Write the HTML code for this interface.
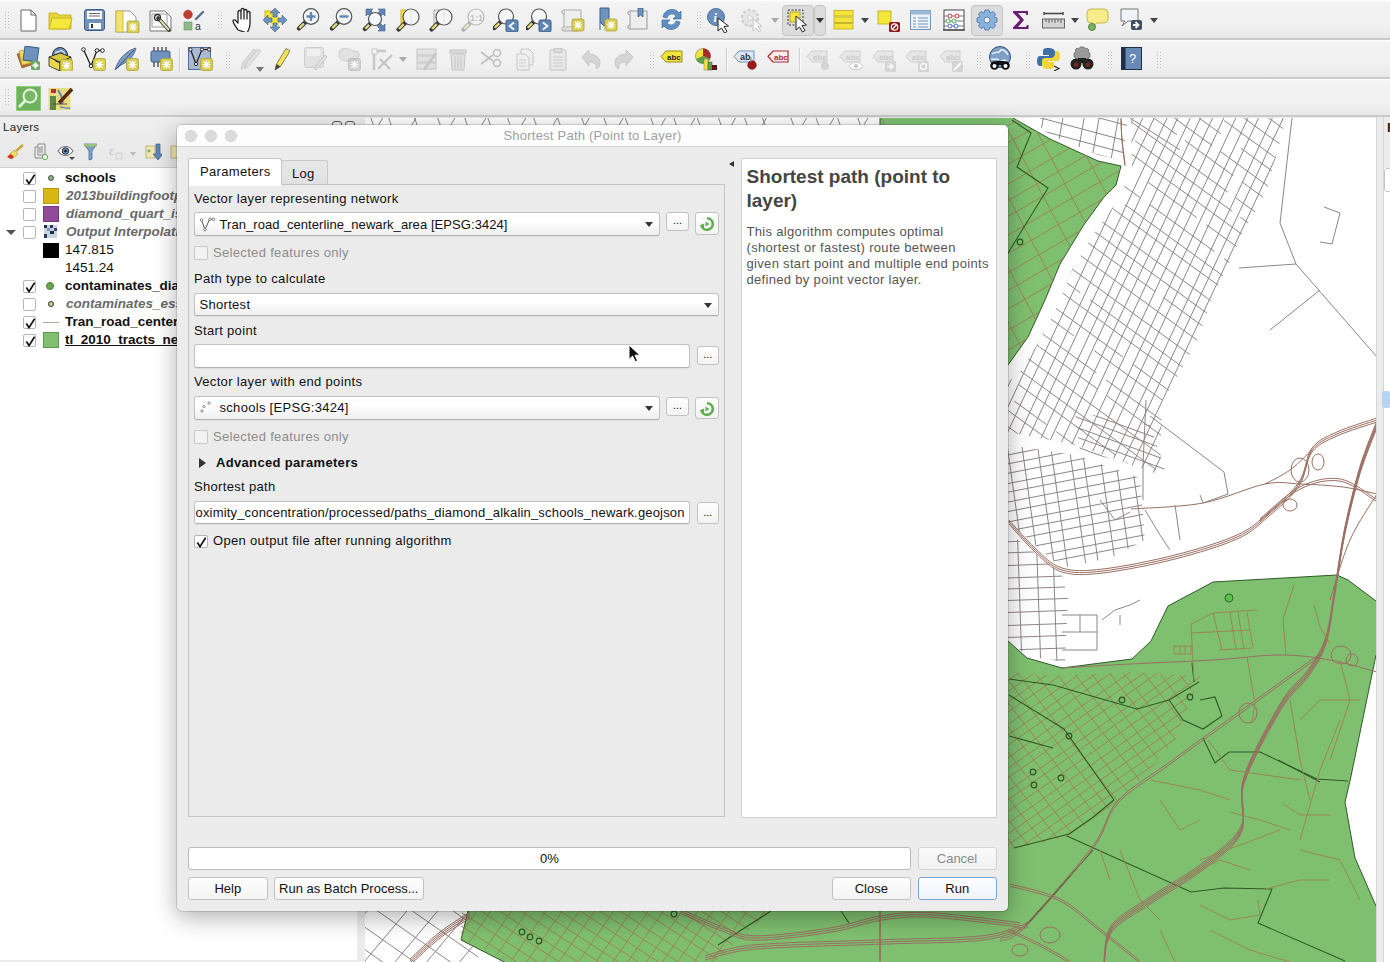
<!DOCTYPE html>
<html><head><meta charset="utf-8">
<style>
*{box-sizing:border-box;margin:0;padding:0}
html,body{width:1390px;height:962px;overflow:hidden;background:#ececec;font-family:"Liberation Sans",sans-serif;font-size:13px;color:#111}
.abs{position:absolute}
.tb{position:absolute;left:0;width:1390px;background:linear-gradient(#f3f3f3,#f0f0f0 70%,#e8e8e8);border-bottom:2px solid #cacaca;box-shadow:inset 0 1px #fff,inset 0 3px #f6f6f6}
.grip{position:absolute;width:6px;height:18px;background-image:radial-gradient(circle,#bdbdbd 0.7px,transparent 0.9px);background-size:3px 3px}
#layers{position:absolute;left:0;top:117px;width:358px;height:845px;background:#ececec}
#tree{position:absolute;left:0;top:168px;width:357px;height:792px;background:#fff}
.row{position:absolute;left:0;height:18px;width:357px;font-size:13.5px;line-height:18px;white-space:nowrap;overflow:hidden}
.cb{position:absolute;width:13px;height:13px;border:1px solid #b5b5b5;background:#fff;border-radius:2px}
.cb svg{position:absolute;left:1px;top:1px}
#map{position:absolute;left:365px;top:118px;width:1011px;height:844px;background:#fff;overflow:hidden}
#rdock{position:absolute;left:1376px;top:117px;width:14px;height:845px;background:#ececec}
#dlg{position:absolute;left:177px;top:125px;width:831px;height:786px;background:#ececec;border-radius:5px;box-shadow:0 0 0 1px rgba(0,0,0,0.12),0 6px 24px rgba(0,0,0,0.32);overflow:hidden}
#dtitle{position:absolute;left:0;top:0;width:831px;height:22px;background:#fdfdfd;border-bottom:1px solid #d4d4d4;text-align:center;font-size:13px;line-height:22px;color:#a0a0a0;letter-spacing:0.23px}
.tl{position:absolute;top:5px;width:12px;height:12px;border-radius:50%;background:#dcdcdc;border:1px solid #d0d0d0}
.lbl{position:absolute;font-size:13px;line-height:16px;color:#111;white-space:nowrap;letter-spacing:0.33px}
.combo{position:absolute;height:25px;background:linear-gradient(#fff 35%,#efefef);border:1px solid #c2c2c2;border-bottom-color:#b0b0b0;border-radius:3px;box-shadow:0 1px 0 rgba(0,0,0,0.05);font-size:13px;line-height:23px;white-space:nowrap;overflow:hidden}
.arrow{position:absolute;width:0;height:0;border-left:4px solid transparent;border-right:4px solid transparent;border-top:5px solid #333}
.btn{position:absolute;background:linear-gradient(#fefefe,#f3f3f3);border:1px solid #c2c2c2;border-radius:3px;font-size:13px;text-align:center;line-height:22px;white-space:nowrap}
</style></head><body>

<!-- toolbars -->
<div class="tb" style="top:0;height:40px"></div>
<div class="tb" style="top:40px;height:39px"></div>
<div class="tb" style="top:79px;height:38px"></div>
<!--tb--><div class="grip" style="left:4px;top:11px"></div>
<svg class="abs" style="left:20px;top:9px" width="17" height="23" viewBox="0 0 17 23"><path d="M1 1h10l5 5v16H1z" fill="#fff" stroke="#666" stroke-width="1"/><path d="M11 1v5h5" fill="none" stroke="#666"/></svg>
<svg class="abs" style="left:48px;top:10px" width="25" height="20" viewBox="0 0 25 20"><path d="M1 3h8l2 2h12v14H1z" fill="#e6d43a" stroke="#c9b52a"/><path d="M1 19l3-11h20l-3 11z" fill="#f6e83a" stroke="#c9b52a"/></svg>
<svg class="abs" style="left:84px;top:9px" width="21" height="22" viewBox="0 0 21 22"><rect x="0.5" y="0.5" width="20" height="21" rx="2.5" fill="#6f93bd" stroke="#3d5f89"/><rect x="3" y="2" width="15" height="8" fill="#fff"/><path d="M5 4.5h11M5 7h11" stroke="#555" stroke-width="0.9"/><rect x="5" y="14" width="12" height="6" fill="#fff"/><rect x="7" y="15" width="2" height="4" fill="#333"/></svg>
<svg class="abs" style="left:115px;top:10px" width="25" height="23" viewBox="0 0 25 23"><path d="M1 1h14l6 6v15H1z" fill="#fff" stroke="#999"/><rect x="1" y="1" width="7" height="21" fill="#f3e36a" stroke="#c6b43c" stroke-width="0.8"/><rect x="12" y="11" width="12" height="12" rx="2" fill="#d9cf55" stroke="#aa9f35" stroke-width="0.8"/><path d="M18 13v8M14 17h8M15 14l6 6M21 14l-6 6" stroke="#fff" stroke-width="1.2"/></svg>
<svg class="abs" style="left:149px;top:10px" width="24" height="23" viewBox="0 0 24 23"><path d="M1 1h15l6 6v14H1z" fill="#fafafa" stroke="#777"/><rect x="3" y="4" width="15" height="13" fill="none" stroke="#888" stroke-width="0.8"/><path d="M9 8l11 12" stroke="#333" stroke-width="3.6" stroke-linecap="round"/><path d="M10 9l10 11" stroke="#e4dfb0" stroke-width="2"/><circle cx="8.5" cy="7.5" r="3" fill="none" stroke="#333" stroke-width="1.3"/></svg>
<svg class="abs" style="left:183px;top:9px" width="22" height="22" viewBox="0 0 22 22"><circle cx="5" cy="5.5" r="4.3" fill="#c23b2e" stroke="#8a2a20" stroke-width="0.6"/><path d="M13 10l7-7" stroke="#546f8f" stroke-width="2.4" stroke-linecap="round"/><rect x="1" y="13" width="8" height="8" fill="#8fb989" stroke="#6a9665" stroke-width="0.6"/><text x="12" y="21" font-size="10.5" font-family="Liberation Sans" fill="#333">a</text></svg>
<div class="grip" style="left:217px;top:11px"></div>
<svg class="abs" style="left:232px;top:7px" width="21" height="25" viewBox="0 0 21 25"><path d="M6 23c-2-3-5-7-5-9 0-1.5 2-1.5 3 0l2 2V5c0-2 3-2 3 0v7-9c0-2 3-2 3 0v9-8c0-2 3-2 3 0v8-6c0-2 3-2 3 0v11c0 4-2 7-3 9z" fill="#fff" stroke="#222" stroke-width="1.3" stroke-linejoin="round"/></svg>
<svg class="abs" style="left:263px;top:8px" width="24" height="24" viewBox="0 0 24 24"><rect x="2" y="3" width="12" height="11" fill="#f3e33a" stroke="#c9b52a"/><rect x="8" y="9" width="8" height="8" fill="#f3e33a"/><path d="M12 0l5 5h-3v4h-4V5H7z M12 24l5-5h-3v-4h-4v4H7z M0 12l5-5v3h4v4H5v3z M24 12l-5-5v3h-4v4h4v3z" fill="#6f93bd" stroke="#45678f" stroke-width="0.6"/></svg>
<svg class="abs" style="left:295px;top:8px" width="25" height="24" viewBox="0 0 25 24"><path d="M10.54 13.96L3.91 20.59" stroke="#333" stroke-width="4.2" stroke-linecap="round"/><path d="M8.98 15.52L4.300000000000001 20.2" stroke="#e5dc7a" stroke-width="2.4"/><circle cx="16" cy="8.5" r="7.8" fill="#f4f6f8" stroke="#555" stroke-width="1.2"/><path d="M16 4v9M11.5 8.5h9" stroke="#5f86b5" stroke-width="2.4"/></svg>
<svg class="abs" style="left:328px;top:8px" width="25" height="24" viewBox="0 0 25 24"><path d="M10.54 13.96L3.91 20.59" stroke="#333" stroke-width="4.2" stroke-linecap="round"/><path d="M8.98 15.52L4.300000000000001 20.2" stroke="#e5dc7a" stroke-width="2.4"/><circle cx="16" cy="8.5" r="7.8" fill="#f4f6f8" stroke="#555" stroke-width="1.2"/><path d="M11.5 8.5h9" stroke="#5f86b5" stroke-width="2.4"/></svg>
<svg class="abs" style="left:361px;top:8px" width="25" height="24" viewBox="0 0 25 24"><path d="M5 1h7l-2 2 3 3-3 3-3-3-2 2z M24 1v7l-2-2-3 3-3-3 3-3-2-2z M24 23h-7l2-2-3-3 3-3 3 3 2-2z" fill="#5f86b5" stroke="#3f5f86" stroke-width="0.6"/><path d="M9.45 15.55L3.924999999999999 21.075000000000003" stroke="#333" stroke-width="4.2" stroke-linecap="round"/><path d="M8.149999999999999 16.85L4.25 20.75" stroke="#e5dc7a" stroke-width="2.4"/><circle cx="14" cy="11" r="6.5" fill="#f4f6f8" stroke="#555" stroke-width="1.2"/></svg>
<svg class="abs" style="left:395px;top:8px" width="25" height="24" viewBox="0 0 25 24"><rect x="6" y="2" width="9" height="14" fill="#f3e33a" stroke="#c9b52a"/><path d="M10.4 14.6L3.5999999999999996 21.4" stroke="#333" stroke-width="4.2" stroke-linecap="round"/><path d="M8.8 16.2L4.0 21.0" stroke="#e5dc7a" stroke-width="2.4"/><circle cx="16" cy="9" r="8" fill="#f4f6f8" stroke="#555" stroke-width="1.2"/><path d="M16 1v16" stroke="#ddd" stroke-width="0.8"/></svg>
<svg class="abs" style="left:428px;top:8px" width="25" height="24" viewBox="0 0 25 24"><rect x="6" y="2" width="9" height="14" fill="#eee" stroke="#aaa"/><path d="M10.4 14.6L3.5999999999999996 21.4" stroke="#333" stroke-width="4.2" stroke-linecap="round"/><path d="M8.8 16.2L4.0 21.0" stroke="#e5dc7a" stroke-width="2.4"/><circle cx="16" cy="9" r="8" fill="#f4f6f8" stroke="#555" stroke-width="1.2"/><path d="M16 1v16" stroke="#ddd" stroke-width="0.8"/></svg>
<svg class="abs" style="left:460px;top:8px" width="25" height="24" viewBox="0 0 25 24"><g opacity="0.35"><path d="M10.4 14.6L3.5999999999999996 21.4" stroke="#333" stroke-width="4.2" stroke-linecap="round"/><path d="M8.8 16.2L4.0 21.0" stroke="#e5dc7a" stroke-width="2.4"/><circle cx="16" cy="9" r="8" fill="#f4f6f8" stroke="#555" stroke-width="1.2"/><text x="10" y="12.5" font-size="9" font-family="Liberation Sans" font-weight="bold" fill="#666">1:1</text></g></svg>
<svg class="abs" style="left:493px;top:8px" width="26" height="24" viewBox="0 0 26 24"><path d="M7.75 13.75L1.375 20.125" stroke="#333" stroke-width="4.2" stroke-linecap="round"/><path d="M6.25 15.25L1.75 19.75" stroke="#e5dc7a" stroke-width="2.4"/><circle cx="13" cy="8.5" r="7.5" fill="#f4f6f8" stroke="#555" stroke-width="1.2"/><rect x="13" y="12" width="12" height="12" rx="1.5" fill="#5f86b5" stroke="#3f5f86"/><path d="M21 14.5l-4.5 3.5 4.5 3.5" fill="none" stroke="#fff" stroke-width="1.6"/></svg>
<svg class="abs" style="left:526px;top:8px" width="26" height="24" viewBox="0 0 26 24"><path d="M7.75 13.75L1.375 20.125" stroke="#333" stroke-width="4.2" stroke-linecap="round"/><path d="M6.25 15.25L1.75 19.75" stroke="#e5dc7a" stroke-width="2.4"/><circle cx="13" cy="8.5" r="7.5" fill="#f4f6f8" stroke="#555" stroke-width="1.2"/><rect x="13" y="12" width="12" height="12" rx="1.5" fill="#5f86b5" stroke="#3f5f86"/><path d="M17 14.5l4.5 3.5-4.5 3.5" fill="none" stroke="#fff" stroke-width="1.6"/></svg>
<svg class="abs" style="left:561px;top:9px" width="24" height="23" viewBox="0 0 24 23"><path d="M3 1h17v17H3z" fill="#eee" stroke="#aaa"/><path d="M3 1c-3 0-3 4 0 4M3 18c-3 0-3 4 0 4h14" fill="#ddd" stroke="#aaa"/><rect x="11" y="10" width="12" height="12" rx="2" fill="#d9cf55" stroke="#aa9f35" stroke-width="0.8"/><path d="M17 12v8M13 16h8M14 13l6 6M20 13l-6 6" stroke="#fff" stroke-width="1.2"/></svg>
<svg class="abs" style="left:599px;top:7px" width="19" height="25" viewBox="0 0 19 25"><path d="M1 1h9v14l-5 4-4-4z" fill="#6f93bd" stroke="#3f5f86"/><path d="M1 15v8" stroke="#3f5f86"/><rect x="6" y="12" width="12" height="12" rx="2" fill="#d9cf55" stroke="#aa9f35" stroke-width="0.8"/><path d="M12 14v8M8 18h8M9 15l6 6M15 15l-6 6" stroke="#fff" stroke-width="1.2"/></svg>
<svg class="abs" style="left:627px;top:8px" width="22" height="23" viewBox="0 0 22 23"><path d="M3 3h17v18H3z" fill="#eee" stroke="#999"/><path d="M3 3c-3 0-3 4 0 4M3 21c-3 0-3-4 0-4" fill="#ddd" stroke="#999"/><path d="M11 0h5v9l-2.5-2-2.5 2z" fill="#6f93bd" stroke="#3f5f86" stroke-width="0.8"/></svg>
<svg class="abs" style="left:660px;top:8px" width="23" height="23" viewBox="0 0 23 23"><path d="M3 9A9 9 0 0 1 19 5l2-2v8h-8l3-3A5 5 0 0 0 7 10z" fill="#5f8fc4" stroke="#3c6a9c" stroke-width="0.7"/><path d="M20 14A9 9 0 0 1 4 18l-2 2v-8h8l-3 3a5 5 0 0 0 9-2z" fill="#5f8fc4" stroke="#3c6a9c" stroke-width="0.7"/></svg>
<div class="grip" style="left:696px;top:11px"></div>
<svg class="abs" style="left:707px;top:8px" width="26" height="25" viewBox="0 0 26 25"><circle cx="9" cy="9" r="8.5" fill="#6a8fbc" stroke="#4f739f"/><text x="6.5" y="14" font-size="12" font-style="italic" font-weight="bold" font-family="Liberation Serif" fill="#fff">i</text><path d="M11 10l0 13 3.5-3 3 5 2.5-1.5-3-5 4.5-0.5z" fill="#fff" stroke="#222" stroke-width="1"/></svg>
<svg class="abs" style="left:740px;top:8px" width="25" height="24" viewBox="0 0 25 24"><g opacity="0.45"><circle cx="10" cy="10" r="8" fill="#ddd" stroke="#aaa" stroke-width="2.5" stroke-dasharray="3 2"/><path d="M8 6.5v7l5.5-3.5z" fill="#fff" stroke="#aaa"/><path d="M13 11l0 12 3-3 3 4 2-1.3-3-4 4-0.5z" fill="#fff" stroke="#999"/></g></svg>
<div class="abs" style="left:771px;top:18px;border-left:4px solid transparent;border-right:4px solid transparent;border-top:5px solid #aaa"></div>
<div class="abs" style="left:782px;top:5px;width:32px;height:31px;background:#dcdcdc;border:1px solid #c4c4c4;border-radius:4px"></div>
<div class="abs" style="left:814px;top:5px;width:12px;height:31px;background:#dcdcdc;border:1px solid #c4c4c4;border-radius:4px"></div>
<svg class="abs" style="left:787px;top:9px" width="24" height="25" viewBox="0 0 24 25"><rect x="1" y="1" width="15" height="15" fill="none" stroke="#333" stroke-dasharray="2 1.5"/><rect x="3" y="3" width="10" height="10" fill="#f3e33a" stroke="#b9a82a"/><path d="M9 7l0 14 3.5-3 3 5 2.5-1.5-3-5 4.5-0.5z" fill="#fff" stroke="#222" stroke-width="1"/></svg>
<div class="abs" style="left:816px;top:18px;border-left:4px solid transparent;border-right:4px solid transparent;border-top:5px solid #333"></div>
<svg class="abs" style="left:833px;top:10px" width="21" height="20" viewBox="0 0 21 20"><rect x="1" y="0.5" width="19" height="5.5" fill="#f3e33a" stroke="#c9b52a"/><rect x="1" y="7" width="19" height="5.5" fill="#f3e33a" stroke="#c9b52a"/><rect x="1" y="13.5" width="19" height="5.5" fill="#f3e33a" stroke="#c9b52a"/></svg>
<div class="abs" style="left:861px;top:18px;border-left:4px solid transparent;border-right:4px solid transparent;border-top:5px solid #444"></div>
<svg class="abs" style="left:877px;top:10px" width="24" height="22" viewBox="0 0 24 22"><rect x="1" y="1" width="13" height="13" fill="#f5e63a" stroke="#c9b52a"/><rect x="12" y="12" width="11" height="10" rx="1.5" fill="#8a1c1c"/><circle cx="17.5" cy="17" r="3.2" fill="none" stroke="#fff" stroke-width="1.2"/><path d="M15.5 19l4-4" stroke="#fff" stroke-width="1.2"/></svg>
<svg class="abs" style="left:910px;top:10px" width="21" height="20" viewBox="0 0 21 20"><rect x="0.5" y="0.5" width="20" height="19" fill="#eef3fa" stroke="#6f93bd"/><rect x="0.5" y="0.5" width="20" height="4" fill="#9fb9d8"/><path d="M3 8h3M8 8h10M3 11h3M8 11h10M3 14h3M8 14h10M3 17h3M8 17h10" stroke="#6f93bd" stroke-width="1.1"/></svg>
<svg class="abs" style="left:943px;top:9px" width="22" height="22" viewBox="0 0 22 22"><rect x="1" y="1" width="20" height="20" fill="#fff" stroke="#444"/><path d="M1 7h20M1 12h20M1 17h20" stroke="#777"/><circle cx="7" cy="7" r="2" fill="#fff" stroke="#c33"/><circle cx="14" cy="7" r="2" fill="#fff" stroke="#c33"/><circle cx="5" cy="12" r="2" fill="#fff" stroke="#5a5"/><circle cx="11" cy="12" r="2" fill="#fff" stroke="#5a5"/><circle cx="7" cy="17" r="2" fill="#fff" stroke="#46c"/><circle cx="13" cy="17" r="2" fill="#fff" stroke="#46c"/><rect x="0" y="20" width="22" height="2" fill="#666"/></svg>
<div class="abs" style="left:971px;top:5px;width:32px;height:31px;background:#dcdcdc;border:1px solid #c4c4c4;border-radius:4px"></div>
<svg class="abs" style="left:976px;top:9px" width="22" height="22" viewBox="0 0 22 22"><g transform="translate(11 11)"><path d="M-2-10h4l1 3 3-1.5 2.5 2.5-1.5 3 3 1v4l-3 1 1.5 3-2.5 2.5-3-1.5-1 3h-4l-1-3-3 1.5-2.5-2.5 1.5-3-3-1v-4l3-1-1.5-3 2.5-2.5 3 1.5z" fill="#8bb0da" stroke="#5a84b8" stroke-width="1"/><circle r="3" fill="#eef" stroke="#5a84b8"/></g></svg>
<svg class="abs" style="left:1012px;top:10px" width="17" height="20" viewBox="0 0 17 20"><path d="M1 1h15v4h-1.5l-1-2H6l6 7-6 7h8l1-2h1.5v4H1v-1.5l7-7.5-7-7.5z" fill="#6b1a78"/></svg>
<svg class="abs" style="left:1042px;top:12px" width="23" height="17" viewBox="0 0 23 17"><path d="M2 1.5h19M2 0v3M21 0v3" stroke="#444" stroke-width="1.4"/><rect x="0.5" y="7" width="22" height="9" fill="#d4d4d4" stroke="#666"/><path d="M4 7v3M7 7v4M10 7v3M13 7v4M16 7v3M19 7v4" stroke="#555" stroke-width="0.9"/></svg>
<div class="abs" style="left:1071px;top:18px;border-left:4px solid transparent;border-right:4px solid transparent;border-top:5px solid #444"></div>
<svg class="abs" style="left:1086px;top:8px" width="23" height="23" viewBox="0 0 23 23"><path d="M5 1h13a4 4 0 0 1 4 4v6a4 4 0 0 1-4 4h-7l-4 3v-3H5a4 4 0 0 1-4-4V5a4 4 0 0 1 4-4z" fill="#f7ec8a" stroke="#c9b84a"/><circle cx="6" cy="19" r="3.5" fill="#7fb069" stroke="#4f8a3a"/></svg>
<svg class="abs" style="left:1120px;top:8px" width="23" height="23" viewBox="0 0 23 23"><path d="M1 1h17v12H8l-6 5 3-5H1z" fill="#f0f3f8" stroke="#777"/><rect x="11" y="12" width="11" height="10" rx="2" fill="#3f4f63"/><path d="M13 17h4M15.5 14l3 3-3 3" stroke="#fff" stroke-width="1.8" fill="none"/></svg>
<div class="abs" style="left:1150px;top:18px;border-left:4px solid transparent;border-right:4px solid transparent;border-top:5px solid #444"></div>
<div class="grip" style="left:4px;top:51px"></div>
<svg class="abs" style="left:16px;top:46px" width="25" height="25" viewBox="0 0 25 25"><path d="M1 8l9-3 5 14-9 3z" fill="#b36b2a" stroke="#7a4a20" stroke-width="0.6"/><path d="M3 5l9-2 3 14-9 2z" fill="#f0d65a" stroke="#b39a30" stroke-width="0.6"/><rect x="8" y="1" width="14" height="14" transform="rotate(8 15 8)" fill="#6f93bd" stroke="#3f5f86"/><rect x="15" y="15" width="9" height="9" rx="1.5" fill="#6fa860"/><path d="M19.5 16.5v6M16.5 19.5h6" stroke="#fff" stroke-width="2"/></svg>
<svg class="abs" style="left:48px;top:46px" width="25" height="25" viewBox="0 0 25 25"><path d="M1 11l11 5v9L1 20z" fill="#e9d64a" stroke="#222" stroke-width="0.8"/><path d="M12 16l11-5v9l-11 5z" fill="#f4e46a" stroke="#222" stroke-width="0.8"/><circle cx="12" cy="9" r="7.5" fill="#5f86b5" stroke="#334"/><path d="M7 7c2-2 4 0 5-2s4 1 5 3M8 12c2-1 3 1 5 0" stroke="#dde6f0" stroke-width="1.3" fill="none"/><path d="M1 11l11-4 11 4-11 5z" fill="#d8c640" stroke="#222" stroke-width="0.8"/><rect x="12.5" y="13.5" width="12" height="12" rx="2" fill="#d9cf55" stroke="#aa9f35" stroke-width="0.8"/><path d="M18.5 15.5v8M14.5 19.5h8M15.5 16.5l6 6M21.5 16.5l-6 6" stroke="#fff" stroke-width="1.2"/></svg>
<svg class="abs" style="left:81px;top:47px" width="25" height="24" viewBox="0 0 25 24"><path d="M2.5 2.5L10 19 16 3.5 21.5 3.5" fill="none" stroke="#222" stroke-width="1.3"/><circle cx="2.5" cy="2.5" r="1.8" fill="#fff" stroke="#222"/><circle cx="10" cy="19" r="1.8" fill="#fff" stroke="#222"/><circle cx="16" cy="3.5" r="1.8" fill="#fff" stroke="#222"/><circle cx="21.5" cy="3.5" r="1.8" fill="#fff" stroke="#222"/><rect x="12.5" y="11.5" width="12" height="12" rx="2" fill="#d9cf55" stroke="#aa9f35" stroke-width="0.8"/><path d="M18.5 13.5v8M14.5 17.5h8M15.5 14.5l6 6M21.5 14.5l-6 6" stroke="#fff" stroke-width="1.2"/></svg>
<svg class="abs" style="left:114px;top:47px" width="25" height="24" viewBox="0 0 25 24"><path d="M1 23C4 13 11 4 22 1c-1 6-6 13-15 17z" fill="#7c9cc4" stroke="#3f5f86" stroke-width="0.8"/><path d="M2 22L20 3" stroke="#334" stroke-width="0.7"/><rect x="12.5" y="11.5" width="12" height="12" rx="2" fill="#d9cf55" stroke="#aa9f35" stroke-width="0.8"/><path d="M18.5 13.5v8M14.5 17.5h8M15.5 14.5l6 6M21.5 14.5l-6 6" stroke="#fff" stroke-width="1.2"/></svg>
<svg class="abs" style="left:150px;top:47px" width="23" height="24" viewBox="0 0 23 24"><path d="M4 0v4M8 0v4M12 0v4M16 0v4M4 15v5M8 15v5M12 15v5M16 15v5" stroke="#333" stroke-width="1.2"/><rect x="1" y="4" width="19" height="11" rx="1.5" fill="#6f93bd" stroke="#3f5f86"/><rect x="10.5" y="11.5" width="12" height="12" rx="2" fill="#d9cf55" stroke="#aa9f35" stroke-width="0.8"/><path d="M16.5 13.5v8M12.5 17.5h8M13.5 14.5l6 6M19.5 14.5l-6 6" stroke="#fff" stroke-width="1.2"/></svg>
<div class="abs" style="left:179px;top:48px;width:1px;height:24px;background:#d0d0d0;box-shadow:1px 0 0 #fafafa"></div>
<svg class="abs" style="left:188px;top:47px" width="25" height="24" viewBox="0 0 25 24"><rect x="0.5" y="0.5" width="22" height="22" fill="#a9bbd3" stroke="#4f6f99"/><path d="M2.5 2.5L8 17 14 2.5 21 2.5" fill="none" stroke="#222" stroke-width="1.2"/><circle cx="2.5" cy="2.5" r="1.6" fill="#fff" stroke="#222"/><circle cx="8" cy="17" r="1.6" fill="#fff" stroke="#222"/><circle cx="14" cy="2.5" r="1.6" fill="#fff" stroke="#222"/><circle cx="21" cy="2.5" r="1.6" fill="#fff" stroke="#222"/><rect x="12.5" y="11.5" width="12" height="12" rx="2" fill="#d9cf55" stroke="#aa9f35" stroke-width="0.8"/><path d="M18.5 13.5v8M14.5 17.5h8M15.5 14.5l6 6M21.5 14.5l-6 6" stroke="#fff" stroke-width="1.2"/></svg>
<div class="grip" style="left:225px;top:51px"></div>
<svg class="abs" style="left:239px;top:47px" width="22" height="24" viewBox="0 0 22 24"><g opacity="0.4"><path d="M2 22l2-7 11-13 4 3L8 19z" fill="#bbb" stroke="#999"/><path d="M6 22l2-7 11-13 3 2-11 14z" fill="#ccc" stroke="#999"/></g></svg>
<div class="abs" style="left:256px;top:67px;border-left:4px solid transparent;border-right:4px solid transparent;border-top:5px solid #777"></div>
<svg class="abs" style="left:274px;top:47px" width="17" height="24" viewBox="0 0 17 24"><path d="M1 23l1.5-6L12 1.5l4 2.5-9.5 15.5z" fill="#efe35a" stroke="#6d6530" stroke-width="0.8"/><path d="M1 23l1.5-6 4 2.5z" fill="#444"/></svg>
<svg class="abs" style="left:304px;top:47px" width="23" height="23" viewBox="0 0 23 23"><g opacity="0.4"><rect x="0.5" y="0.5" width="19" height="20" rx="2" fill="#ccc" stroke="#999"/><rect x="3" y="2" width="13" height="7" fill="#eee"/><path d="M10 21l11-13 2 2-11 13z" fill="#ccc" stroke="#888"/></g></svg>
<svg class="abs" style="left:337px;top:47px" width="24" height="24" viewBox="0 0 24 24"><g opacity="0.4"><path d="M2 6c0-6 10-5 12-3s8-1 8 5-6 6-12 6-8-2-8-8z" fill="#ccc" stroke="#999"/></g><g opacity="0.55"><rect x="11.5" y="11.5" width="12" height="12" rx="2" fill="#bbb" stroke="#999" stroke-width="0.8"/><path d="M17.5 13.5v8M13.5 17.5h8M14.5 14.5l6 6M20.5 14.5l-6 6" stroke="#fff" stroke-width="1.2"/></g></svg>
<svg class="abs" style="left:371px;top:47px" width="22" height="24" viewBox="0 0 22 24"><g opacity="0.4"><path d="M3 4v19M3 4h12M7 22l14-14M9 12l10 10" stroke="#888" stroke-width="2.4"/><rect x="1" y="2" width="5" height="5" fill="#fff" stroke="#888"/></g></svg>
<div class="abs" style="left:399px;top:57px;border-left:4px solid transparent;border-right:4px solid transparent;border-top:5px solid #aaa"></div>
<svg class="abs" style="left:416px;top:47px" width="21" height="24" viewBox="0 0 21 24"><g opacity="0.4"><rect x="1" y="2" width="19" height="6" fill="#ccc" stroke="#888"/><rect x="1" y="9" width="19" height="6" fill="#ccc" stroke="#888"/><rect x="1" y="16" width="19" height="6" fill="#ccc" stroke="#888"/><path d="M8 23l12-17" stroke="#888" stroke-width="2.5"/></g></svg>
<svg class="abs" style="left:449px;top:48px" width="18" height="23" viewBox="0 0 18 23"><g opacity="0.4"><rect x="1" y="2" width="16" height="3" fill="#bbb" stroke="#888"/><path d="M2 6h14l-1 16H3z" fill="#ccc" stroke="#888"/><path d="M6 8v12M9 8v12M12 8v12" stroke="#888"/></g></svg>
<svg class="abs" style="left:480px;top:49px" width="23" height="20" viewBox="0 0 23 20"><g opacity="0.4"><path d="M1 3l12 9M1 15l12-9" stroke="#777" stroke-width="1.6"/><circle cx="17" cy="4" r="3.5" fill="none" stroke="#777" stroke-width="1.6"/><circle cx="17" cy="14" r="3.5" fill="none" stroke="#777" stroke-width="1.6"/></g></svg>
<svg class="abs" style="left:516px;top:48px" width="18" height="23" viewBox="0 0 18 23"><g opacity="0.4"><path d="M5 1h8l4 4v12H5z" fill="#eee" stroke="#888"/><path d="M1 6h8l4 4v12H1z" fill="#eee" stroke="#888"/><path d="M3 12h7M3 15h7M3 18h7" stroke="#999"/></g></svg>
<svg class="abs" style="left:549px;top:48px" width="18" height="23" viewBox="0 0 18 23"><g opacity="0.4"><rect x="1" y="2" width="16" height="20" rx="1" fill="#ddd" stroke="#888"/><rect x="5" y="0.5" width="8" height="4" fill="#bbb" stroke="#888"/><path d="M4 9h10M4 12h10M4 15h10M4 18h10" stroke="#999"/></g></svg>
<svg class="abs" style="left:581px;top:49px" width="20" height="20" viewBox="0 0 20 20"><g opacity="0.38"><path d="M1 8l7-7v4c7 0 11 4 11 9 0 3-2 5-4 6 1-2 1-7-7-7v4z" fill="#aaa" stroke="#888"/></g></svg>
<svg class="abs" style="left:613px;top:49px" width="21" height="20" viewBox="0 0 21 20"><g opacity="0.38"><path d="M20 8l-7-7v4C6 5 2 9 2 14c0 3 2 5 4 6-1-2-1-7 7-7v4z" fill="#aaa" stroke="#888"/></g></svg>
<div class="grip" style="left:649px;top:51px"></div>
<svg class="abs" style="left:660px;top:50px" width="23" height="13" viewBox="0 0 23 13"><path d="M1 6.5L6 1h16v11H6z" fill="#f2e23a" stroke="#9a8c1a"/><text x="7" y="10" font-size="8" font-family="Liberation Sans" font-weight="bold" fill="#222">abc</text></svg>
<svg class="abs" style="left:695px;top:48px" width="23" height="23" viewBox="0 0 23 23"><circle cx="8" cy="8" r="7.5" fill="#f3e33a" stroke="#777" stroke-width="0.6"/><path d="M8 8V0.5A7.5 7.5 0 0 1 15 11z" fill="#a62a2a"/><path d="M8 8l7 3A7.5 7.5 0 0 1 1 11z" fill="#5da04a"/><rect x="9" y="11" width="4" height="11" fill="#f3e33a" stroke="#777" stroke-width="0.5"/><rect x="13" y="14" width="4" height="8" fill="#5da04a" stroke="#555" stroke-width="0.5"/><rect x="17" y="17" width="5" height="5" fill="#5a1a1a"/></svg>
<div class="abs" style="left:726px;top:48px;width:1px;height:24px;background:#d0d0d0;box-shadow:1px 0 0 #fafafa"></div>
<svg class="abs" style="left:733px;top:50px" width="26" height="20" viewBox="0 0 26 20"><path d="M1 6.5L6 1h15v11H6z" fill="#dde8f4" stroke="#6f93bd"/><text x="7" y="10" font-size="9" font-family="Liberation Sans" font-weight="bold" fill="#334">ab</text><circle cx="19" cy="15" r="4.3" fill="#a01818" stroke="#6a1010" stroke-width="0.6"/><path d="M18 7v5" stroke="#888" stroke-width="1"/></svg>
<svg class="abs" style="left:767px;top:50px" width="22" height="13" viewBox="0 0 22 13"><path d="M1 6.5L6 1h15v11H6z" fill="#fbeeee" stroke="#b02a2a" stroke-width="1.2"/><text x="7" y="10" font-size="8" font-family="Liberation Sans" font-weight="bold" fill="#b02a2a">abc</text></svg>
<div class="abs" style="left:799px;top:48px;width:1px;height:24px;background:#d0d0d0;box-shadow:1px 0 0 #fafafa"></div>
<svg class="abs" style="left:806px;top:50px" width="26" height="22" viewBox="0 0 26 22"><g opacity="0.75"><path d="M1 6.5L6 1h15v11H6z" fill="#e3e3e3" stroke="#c4c4c4"/><text x="7" y="10" font-size="8" font-family="Liberation Sans" font-weight="bold" fill="#c0c0c0">abc</text><circle cx="19" cy="16" r="4" fill="#ccc"/><path d="M18 7v6" stroke="#bbb"/></g></svg>
<svg class="abs" style="left:839px;top:50px" width="26" height="22" viewBox="0 0 26 22"><g opacity="0.75"><path d="M1 6.5L6 1h15v11H6z" fill="#e3e3e3" stroke="#c4c4c4"/><text x="7" y="10" font-size="8" font-family="Liberation Sans" font-weight="bold" fill="#c0c0c0">abc</text><path d="M10 16c4-5 10-5 14 0-4 5-10 5-14 0z" fill="#fff" stroke="#bbb"/><circle cx="17" cy="16" r="2" fill="#bbb"/></g></svg>
<svg class="abs" style="left:872px;top:50px" width="26" height="22" viewBox="0 0 26 22"><g opacity="0.75"><path d="M1 6.5L6 1h15v11H6z" fill="#e3e3e3" stroke="#c4c4c4"/><text x="7" y="10" font-size="8" font-family="Liberation Sans" font-weight="bold" fill="#c0c0c0">abc</text><rect x="13" y="11" width="11" height="11" rx="1.5" fill="#ccc"/><path d="M15 16.5h5M18 13.5l3 3-3 3" stroke="#fff" stroke-width="1.6" fill="none"/></g></svg>
<svg class="abs" style="left:905px;top:50px" width="26" height="22" viewBox="0 0 26 22"><g opacity="0.75"><path d="M1 6.5L6 1h15v11H6z" fill="#e3e3e3" stroke="#c4c4c4"/><text x="7" y="10" font-size="8" font-family="Liberation Sans" font-weight="bold" fill="#c0c0c0">abc</text><rect x="13" y="11" width="11" height="11" rx="1.5" fill="#ccc"/><circle cx="18.5" cy="16.5" r="3" fill="none" stroke="#fff" stroke-width="1.4"/></g></svg>
<svg class="abs" style="left:939px;top:50px" width="26" height="22" viewBox="0 0 26 22"><g opacity="0.75"><path d="M1 6.5L6 1h15v11H6z" fill="#e3e3e3" stroke="#c4c4c4"/><text x="7" y="10" font-size="8" font-family="Liberation Sans" font-weight="bold" fill="#c0c0c0">abc</text><rect x="13" y="11" width="11" height="11" rx="1.5" fill="#ccc"/><path d="M15 20l7-7" stroke="#fff" stroke-width="1.8"/></g></svg>
<div class="grip" style="left:976px;top:51px"></div>
<svg class="abs" style="left:987px;top:46px" width="26" height="25" viewBox="0 0 26 25"><circle cx="13" cy="11" r="10.5" fill="#7e9fc6" stroke="#2f4f76"/><path d="M5 8c3-3 6 0 8-3s7 1 8 4M4 13c3 1 5-1 8 1M14 15c2 0 4-2 6 0" stroke="#e6eef6" stroke-width="1.5" fill="none"/><circle cx="7.5" cy="19.5" r="4.3" fill="#111"/><circle cx="18.5" cy="19.5" r="4.3" fill="#111"/><rect x="9" y="15" width="8" height="4" fill="#111"/><circle cx="7.5" cy="20" r="2" fill="#fff"/><circle cx="18.5" cy="20" r="2" fill="#fff"/></svg>
<div class="grip" style="left:1025px;top:51px"></div>
<svg class="abs" style="left:1037px;top:47px" width="24" height="24" viewBox="0 0 24 24"><path d="M11 1c-5 0-5 2-5 4v3h6v1H3c-2 0-3 2-3 5s1 5 3 5h2v-3c0-2 2-4 4-4h6c2 0 3-1 3-3V5c0-2-2-4-7-4z" fill="#3f6fa8"/><path d="M12 22c5 0 5-2 5-4v-3h-6v-1h9c2 0 3-2 3-5s-1-5-3-5h-2v3c0 2-2 4-4 4H8c-2 0-3 1-3 3v4c0 2 2 4 7 4z" fill="#f2d43a"/><path d="M17 19l5 2.5-5 2.5" stroke="#222" fill="none" stroke-width="1.1"/></svg>
<svg class="abs" style="left:1069px;top:46px" width="26" height="25" viewBox="0 0 26 25"><g transform="translate(13 7)"><path d="M-2-6h4l1 2 2-1 2 2-1 2 2 1v4l-2 1 1 2-2 2-2-1-1 2h-4l-1-2-2 1-2-2 1-2-2-1v-4l2-1-1-2 2-2 2 1z" fill="#999" stroke="#666" stroke-width="0.7"/></g><circle cx="7" cy="18" r="5.5" fill="#222"/><circle cx="19" cy="18" r="5.5" fill="#222"/><rect x="9" y="12" width="8" height="5" fill="#222"/><circle cx="7" cy="18.5" r="2.3" fill="#7a2a1a"/><circle cx="19" cy="18.5" r="2.3" fill="#7a2a1a"/></svg>
<div class="grip" style="left:1107px;top:51px"></div>
<svg class="abs" style="left:1121px;top:47px" width="21" height="23" viewBox="0 0 21 23"><rect x="0.5" y="0.5" width="20" height="22" fill="#6689b5" stroke="#1f2f44"/><rect x="0.5" y="0.5" width="4" height="22" fill="#1f2f44"/><text x="8" y="16" font-size="13" font-family="Liberation Sans" fill="#fff">?</text></svg>
<div class="grip" style="left:1156px;top:51px"></div>
<div class="grip" style="left:4px;top:88px"></div>
<svg class="abs" style="left:16px;top:86px" width="25" height="25" viewBox="0 0 25 25"><rect x="0.5" y="0.5" width="24" height="24" fill="#6fb25e" stroke="#8ccd7a"/><circle cx="14" cy="10" r="6.5" fill="#78b868" stroke="#e6f5df" stroke-width="2"/><path d="M9.5 14.5L3 21" stroke="#e6f5df" stroke-width="2.6"/></svg>
<svg class="abs" style="left:48px;top:86px" width="26" height="25" viewBox="0 0 26 25"><rect x="0.5" y="2" width="22" height="22" fill="#e8dc80"/><path d="M2 10h6v14H2z" fill="#5a8a4a"/><path d="M10 4c2 4 6 8 4 14" stroke="#6a88b8" stroke-width="2" fill="none"/><path d="M5 18h14" stroke="#333" stroke-width="0.8"/><rect x="3" y="3" width="5" height="4" fill="#a33"/><path d="M11 17L24 3" stroke="#5a2a10" stroke-width="3.5"/><path d="M12 21c3 0 8 2 10 1" stroke="#6a88b8" stroke-width="1.5" fill="none"/></svg>
<!--/tb-->

<!-- layers panel -->
<div id="layers" style="background:linear-gradient(#efefef,#e9e9e9 40px,#ececec)"><div class="abs" style="left:3px;top:4px;font-size:11.5px;color:#222;letter-spacing:0.3px">Layers</div><div class="abs" style="left:0;top:50px;width:357px;height:1px;background:#d0d0d0"></div>
<svg class="abs" style="left:7px;top:27px" width="17" height="16" viewBox="0 0 17 16"><path d="M9 7l7-6" stroke="#c9a63a" stroke-width="2.5"/><path d="M1 12l6-6 4 4-6 5z" fill="#f0dc5a" stroke="#b9983a" stroke-width="0.6"/><path d="M0 13l4-3 3 3-3 2z" fill="#c8302a"/></svg>
<svg class="abs" style="left:33px;top:26px" width="16" height="17" viewBox="0 0 16 17"><path d="M5 1h7v11H5z M2 4h3M2 4v11h8v-3" fill="none" stroke="#888" stroke-width="1"/><path d="M7 4v6M9 3v7" stroke="#888"/><circle cx="12" cy="14" r="2.6" fill="#fff" stroke="#5a5" stroke-width="1"/></svg>
<svg class="abs" style="left:57px;top:27px" width="19" height="17" viewBox="0 0 19 17"><path d="M1 7c4-6 11-6 15 0-4 6-11 6-15 0z" fill="#fff" stroke="#777" stroke-width="1.1"/><circle cx="8.5" cy="7" r="3.3" fill="#5f86b5" stroke="#334"/><circle cx="8.5" cy="7" r="1.2" fill="#111"/><path d="M12 13h6l-3 3z" fill="#444"/></svg>
<svg class="abs" style="left:83px;top:26px" width="15" height="18" viewBox="0 0 15 18"><path d="M1 1h13l-5 7v8l-3 1V8z" fill="#7f9fc6" stroke="#4f6f96" stroke-width="0.8"/><rect x="1" y="1" width="13" height="2.5" fill="#9ac27a"/></svg>
<svg class="abs" style="left:108px;top:27px" width="30" height="17" viewBox="0 0 30 17"><text x="1" y="11" font-size="13" font-family="Liberation Serif" fill="#c4c4c4">ε</text><path d="M8 9h6v6H8z" fill="none" stroke="#d0d0d0"/><path d="M22 8h6l-3 4z" fill="#bbb"/></svg>
<svg class="abs" style="left:145px;top:26px" width="17" height="18" viewBox="0 0 17 18"><rect x="1" y="3" width="9" height="12" fill="#f0e7b0" stroke="#b9a870" stroke-width="0.8"/><circle cx="4" cy="8" r="1.5" fill="#7a6"/><path d="M11 1v10h-3l5 6 5-6h-3V1z" fill="#5f86b5" stroke="#3f5f86" stroke-width="0.7"/></svg>
<svg class="abs" style="left:170px;top:26px" width="8" height="18" viewBox="0 0 8 18"><rect x="1" y="3" width="9" height="12" fill="#f0e7b0" stroke="#b9a870" stroke-width="0.8"/></svg>
</div>
<div class="abs" style="left:332px;top:121px;width:10px;height:9px;border:1.2px solid #555;border-radius:3px"></div><div class="abs" style="left:345px;top:121px;width:10px;height:9px;border:1.2px solid #555;border-radius:3px"></div>
<div id="tree">
  <div class="row" style="top:1px"><div class="cb on" style="left:23px;top:3px"><svg width="11" height="11" viewBox="0 0 11 11"><path d="M1.3 5.6L4 9.6 9.6 0.8" fill="none" stroke="#111" stroke-width="1.7" stroke-linejoin="miter"/></svg></div><div class="abs" style="left:48px;top:6px;width:6px;height:6px;border-radius:50%;border:1.5px solid #3d5a3a;background:#9a9"></div><span class="abs" style="left:65px;font-weight:bold">schools</span></div>
  <div class="row" style="top:19px"><div class="cb" style="left:23px;top:3px"></div><div class="abs" style="left:43px;top:1px;width:16px;height:16px;background:#d9b713;border:1px solid #b89a10"></div><span class="abs" style="left:66px;font-weight:bold;font-style:italic;color:#6a6a6a">2013buildingfootprints</span></div>
  <div class="row" style="top:37px"><div class="cb" style="left:23px;top:3px"></div><div class="abs" style="left:43px;top:1px;width:16px;height:16px;background:#8e4c9b;border:1px solid #6e3a7a"></div><span class="abs" style="left:66px;font-weight:bold;font-style:italic;color:#6a6a6a">diamond_quart_isolines</span></div>
  <div class="row" style="top:55px"><div class="abs" style="left:6px;top:7px;border-left:5px solid transparent;border-right:5px solid transparent;border-top:5px solid #555"></div><div class="cb" style="left:23px;top:3px"></div>
    <svg class="abs" style="left:44px;top:2px" width="13" height="13" viewBox="0 0 13 13"><rect width="13" height="13" fill="#c8d4e2"/><rect x="0" y="0" width="3" height="3" fill="#1e2f4a"/><rect x="6" y="0" width="3" height="3" fill="#2a3d5e"/><rect x="3" y="3" width="3" height="3" fill="#7f95b5"/><rect x="6" y="6" width="4" height="3" fill="#1e2f4a"/><rect x="0" y="9" width="3" height="4" fill="#2a3d5e"/><rect x="10" y="3" width="3" height="3" fill="#33486a"/></svg>
    <span class="abs" style="left:66px;font-weight:bold;font-style:italic;color:#6a6a6a">Output Interpolation</span></div>
  <div class="row" style="top:73px"><div class="abs" style="left:43px;top:2px;width:16px;height:15px;background:#000"></div><span class="abs" style="left:65px">147.815</span></div>
  <div class="row" style="top:91px"><span class="abs" style="left:65px">1451.24</span></div>
  <div class="row" style="top:109px"><div class="cb on" style="left:23px;top:3px"><svg width="11" height="11" viewBox="0 0 11 11"><path d="M1.3 5.6L4 9.6 9.6 0.8" fill="none" stroke="#111" stroke-width="1.7" stroke-linejoin="miter"/></svg></div><div class="abs" style="left:46px;top:5px;width:8px;height:8px;border-radius:50%;background:#6aa84f;border:1px solid #4a7a3a"></div><span class="abs" style="left:65px;font-weight:bold">contaminates_diamond</span></div>
  <div class="row" style="top:127px"><div class="cb" style="left:23px;top:3px"></div><div class="abs" style="left:48px;top:6px;width:6px;height:6px;border-radius:50%;border:1.5px solid #333;background:#cc9"></div><span class="abs" style="left:66px;font-weight:bold;font-style:italic;color:#6a6a6a">contaminates_essex</span></div>
  <div class="row" style="top:145px"><div class="cb on" style="left:23px;top:3px"><svg width="11" height="11" viewBox="0 0 11 11"><path d="M1.3 5.6L4 9.6 9.6 0.8" fill="none" stroke="#111" stroke-width="1.7" stroke-linejoin="miter"/></svg></div><div class="abs" style="left:43px;top:9px;width:16px;height:1px;background:#b9a9a5"></div><span class="abs" style="left:65px;font-weight:bold">Tran_road_centerline</span></div>
  <div class="row" style="top:163px"><div class="cb on" style="left:23px;top:3px"><svg width="11" height="11" viewBox="0 0 11 11"><path d="M1.3 5.6L4 9.6 9.6 0.8" fill="none" stroke="#111" stroke-width="1.7" stroke-linejoin="miter"/></svg></div><div class="abs" style="left:43px;top:1px;width:16px;height:16px;background:#80c070;border:1px solid #5f9a55"></div><span class="abs" style="left:65px;font-weight:bold;text-decoration:underline">tl_2010_tracts_newark</span></div>
</div>

<div id="map"><svg width="1011" height="844" viewBox="365 118 1011 844" style="position:absolute;left:0;top:0;display:block"><defs><clipPath id="g1"><polygon points="1131.0,118.0 1132.0,170.0 1118.0,200.0 1095.0,232.0 1072.0,270.0 1058.0,305.0 1040.0,340.0 1020.0,372.0 1008.0,382.0 1008.0,432.0 1075.0,445.0 1160.0,475.0 1162.0,402.0 1182.0,369.0 1199.0,337.0 1211.0,300.0 1227.0,268.0 1243.0,232.0 1267.0,191.0 1284.0,126.0 1290.0,118.0"/></clipPath><clipPath id="g2"><polygon points="1008.0,445.0 1075.0,455.0 1140.0,478.0 1145.0,540.0 1110.0,558.0 1062.0,568.0 1008.0,522.0"/></clipPath><clipPath id="g2b"><polygon points="1008.0,532.0 1062.0,574.0 1068.0,600.0 1065.0,662.0 1027.0,656.0 1008.0,640.0"/></clipPath><clipPath id="g1b"><polygon points="1075.0,412.0 1150.0,425.0 1165.0,470.0 1080.0,452.0"/></clipPath><clipPath id="g3"><polygon points="1030.0,118.0 1128.0,118.0 1122.0,160.0 1098.0,155.0 1050.0,135.0"/></clipPath><clipPath id="g4"><polygon points="1008.0,672.0 1062.0,676.0 1132.0,672.0 1200.0,676.0 1175.0,740.0 1150.0,770.0 1120.0,800.0 1070.0,836.0 1008.0,850.0"/></clipPath><clipPath id="g5"><polygon points="462.0,911.0 770.0,911.0 715.0,962.0 516.0,962.0 461.0,940.0"/></clipPath><clipPath id="g6"><polygon points="365.0,118.0 887.0,118.0 887.0,126.0 365.0,126.0"/></clipPath><clipPath id="g7"><polygon points="1008.0,118.0 1013.0,118.0 1050.0,139.0 1098.0,161.0 1121.0,166.0 1116.0,185.0 1104.0,197.0 1083.0,226.0 1060.0,264.0 1045.0,300.0 1028.0,337.0 1008.0,365.0"/></clipPath><clipPath id="g8"><polygon points="365.0,911.0 468.0,911.0 461.0,940.0 516.0,962.0 365.0,962.0"/></clipPath></defs><rect x="365" y="118" width="1011" height="844" fill="#fff"/><polygon points="880.0,110.0 1005.0,110.0 1013.0,118.0 1050.0,139.0 1098.0,161.0 1121.0,166.0 1116.0,185.0 1104.0,197.0 1083.0,226.0 1060.0,264.0 1045.0,300.0 1028.0,337.0 1008.0,365.0 880.0,400.0" fill="#7fc070" stroke="#2f5a26" stroke-width="1"/><polygon points="1008.0,641.0 1027.0,658.0 1062.0,668.0 1132.0,659.0 1151.0,641.0 1168.0,606.0 1213.0,582.0 1337.0,575.0 1348.0,580.0 1376.0,601.0 1384.0,601.0 1384.0,655.0 1376.0,655.0 1350.0,781.0 1345.0,802.0 1355.0,858.0 1376.0,906.0 1384.0,906.0 1384.0,970.0 520.0,970.0 461.0,940.0 468.0,911.0 700.0,850.0 1008.0,641.0" fill="#7fc070" stroke="#2f5a26" stroke-width="1"/><path clip-path="url(#g1)" d="M1520.9 205.1L1295.1 689.2M1510.7 200.3L1284.9 684.4M1501.5 196.1L1275.8 680.2M1491.5 191.4L1265.8 675.5M1482.0 186.9L1256.2 671.1M1473.7 183.1L1247.9 667.2M1464.3 178.7L1238.5 662.8M1452.9 173.4L1227.2 657.5M1444.7 169.6L1218.9 653.7M1435.2 165.1L1209.5 649.3M1424.1 159.9L1198.3 644.1M1415.7 156.0L1189.9 640.1M1405.4 151.2L1179.6 635.3M1396.6 147.2L1170.9 631.3M1386.8 142.6L1161.0 626.7M1378.3 138.6L1152.6 622.7M1367.7 133.7L1142.0 617.8M1357.7 129.0L1132.0 613.1M1349.0 124.9L1123.2 609.0M1339.0 120.3L1113.2 604.4M1329.6 115.9L1103.9 600.0M1321.4 112.1L1095.7 596.2M1310.4 106.9L1084.6 591.0M1301.2 102.7L1075.5 586.8M1292.3 98.5L1066.6 582.6M1283.4 94.4L1057.7 578.5M1272.1 89.1L1046.3 573.2M1263.4 85.0L1037.7 569.1M1253.4 80.3L1027.6 564.5M1243.5 75.7L1017.8 559.9M1234.3 71.5L1008.6 555.6M1224.4 66.8L998.6 550.9M1216.0 62.9L990.3 547.0M1205.6 58.1L979.9 542.2M1196.9 54.0L971.1 538.1M1186.3 49.1L960.5 533.2M1176.9 44.7L951.1 528.8M1169.1 41.0L943.3 525.2M1159.5 36.6L933.7 520.7M1149.8 32.0L924.0 516.2M1138.6 26.8L912.9 511.0M1130.3 22.9L904.5 507.1M1120.3 18.3L894.6 502.4M1111.5 14.2L885.8 498.3M1101.6 9.6L875.8 493.7M1092.3 5.2L866.6 489.4M1082.9 0.8L857.1 485.0M1072.8 -3.8L847.1 480.3M1063.3 -8.3L837.6 475.8M1053.1 -13.0L827.4 471.1M1044.1 -17.2L818.3 466.9M1034.0 -21.9L808.3 462.2M1024.7 -26.3L798.9 457.8" stroke="#8f8484" stroke-width="1" fill="none" opacity="1"/><g clip-path="url(#g1)" stroke="#8f8484" stroke-width="1" fill="none"><path d="M1107.4 -50.4L1539.5 263.6" stroke-dasharray="80 10 60 12 120 12 200 12"/><path d="M1099.9 -40.1L1532.0 273.8" stroke-dasharray="200 25 40 25 200 10 120 0"/><path d="M1092.8 -30.4L1525.0 283.5" stroke-dasharray="80 12 80 25 80 25 80 0"/><path d="M1083.0 -16.9L1515.1 297.1" stroke-dasharray="120 25 80 0 120 25 200 0"/><path d="M1074.5 -5.2L1506.6 308.8" stroke-dasharray="40 10 120 10 80 25 80 12"/><path d="M1066.4 5.9L1498.6 319.9" stroke-dasharray="40 25 40 0 80 10 120 10"/><path d="M1059.0 16.2L1491.1 330.1" stroke-dasharray="200 25 80 0 80 0 80 10"/><path d="M1050.4 28.0L1482.5 341.9" stroke-dasharray="200 10 80 12 40 0 200 0"/><path d="M1043.4 37.7L1475.5 351.6" stroke-dasharray="80 25 60 10 60 10 60 12"/><path d="M1033.7 51.0L1465.8 365.0" stroke-dasharray="40 0 200 10 80 0 120 0"/><path d="M1026.0 61.5L1458.2 375.5" stroke-dasharray="40 10 60 25 120 10 60 0"/><path d="M1018.5 71.9L1450.6 385.9" stroke-dasharray="40 25 60 10 200 0 80 10"/><path d="M1010.8 82.5L1442.9 396.5" stroke-dasharray="40 25 80 25 60 12 80 25"/><path d="M1000.7 96.4L1432.8 410.3" stroke-dasharray="80 12 80 12 80 12 200 12"/><path d="M992.1 108.1L1424.3 422.1" stroke-dasharray="40 12 60 0 40 12 200 25"/><path d="M986.0 116.6L1418.2 430.5" stroke-dasharray="120 25 60 0 120 25 80 25"/><path d="M976.1 130.2L1408.3 444.2" stroke-dasharray="80 0 40 25 80 0 60 0"/><path d="M968.8 140.2L1401.0 454.2" stroke-dasharray="40 25 60 12 200 0 40 12"/><path d="M961.2 150.7L1393.4 464.7" stroke-dasharray="40 0 200 10 60 0 200 25"/><path d="M952.6 162.5L1384.8 476.5" stroke-dasharray="120 0 200 0 80 0 80 25"/><path d="M943.3 175.4L1375.4 489.4" stroke-dasharray="120 0 80 0 60 0 200 0"/><path d="M934.8 187.0L1367.0 501.0" stroke-dasharray="60 0 80 0 40 12 200 12"/><path d="M928.5 195.7L1360.7 509.7" stroke-dasharray="40 10 60 10 200 25 200 12"/><path d="M919.0 208.9L1351.1 522.8" stroke-dasharray="40 12 80 0 40 0 40 0"/><path d="M912.1 218.3L1344.2 532.3" stroke-dasharray="40 0 120 0 40 25 200 12"/><path d="M902.3 231.9L1334.4 545.8" stroke-dasharray="80 0 80 0 80 12 120 25"/><path d="M895.0 241.9L1327.1 555.9" stroke-dasharray="80 10 80 0 80 12 40 0"/><path d="M885.4 255.0L1317.6 569.0" stroke-dasharray="200 0 120 0 200 0 40 10"/><path d="M877.0 266.7L1309.1 580.7" stroke-dasharray="120 25 200 12 40 25 120 0"/><path d="M869.9 276.5L1302.0 590.4" stroke-dasharray="80 12 80 12 120 12 40 0"/><path d="M860.5 289.4L1292.6 603.4" stroke-dasharray="60 25 80 25 40 12 60 12"/><path d="M853.9 298.5L1286.0 612.5" stroke-dasharray="60 0 80 10 200 10 40 12"/><path d="M846.2 309.1L1278.3 623.0" stroke-dasharray="40 25 120 0 80 25 200 0"/><path d="M836.7 322.1L1268.9 636.0" stroke-dasharray="200 0 120 0 60 12 40 25"/><path d="M829.8 331.6L1262.0 645.5" stroke-dasharray="40 25 40 12 60 0 80 0"/><path d="M821.2 343.4L1253.3 657.4" stroke-dasharray="40 0 120 10 200 10 40 0"/><path d="M812.5 355.4L1244.6 669.4" stroke-dasharray="200 25 200 0 40 25 40 25"/><path d="M803.8 367.4L1235.9 681.4" stroke-dasharray="40 25 80 25 60 0 60 0"/><path d="M796.6 377.3L1228.8 691.2" stroke-dasharray="60 12 200 12 80 10 200 12"/><path d="M788.7 388.2L1220.8 702.2" stroke-dasharray="80 25 120 0 120 25 60 12"/><path d="M778.5 402.2L1210.6 716.2" stroke-dasharray="60 12 200 25 200 12 60 12"/></g><path clip-path="url(#g2)" d="M960.1 425.5L1153.3 387.9M961.6 433.3L1154.8 395.8M963.4 442.6L1156.6 405.0M965.5 453.2L1158.7 415.6M967.4 462.8L1160.6 425.3M969.0 471.4L1162.2 433.8M970.8 480.5L1164.0 443.0M972.7 490.4L1165.9 452.9M974.3 498.7L1167.5 461.1M976.2 508.2L1169.4 470.6M978.0 517.4L1171.2 479.8M979.9 527.4L1173.1 489.9M981.6 536.2L1174.8 498.7M983.4 545.4L1176.6 507.8M985.4 555.6L1178.6 518.1M987.3 565.5L1180.5 527.9M988.9 573.5L1182.1 535.9M990.9 583.6L1184.1 546.1M992.6 592.4L1185.8 554.8M994.5 602.6L1187.7 565.0M996.2 611.4L1189.4 573.8M997.9 620.1L1191.1 582.5M999.7 629.3L1192.9 591.7M1168.7 396.2L1196.1 591.1M1152.0 398.5L1179.4 593.4M1137.5 400.5L1164.9 595.4M1123.5 402.5L1150.9 597.4M1107.9 404.7L1135.3 599.6M1093.2 406.8L1120.6 601.7M1076.6 409.1L1104.0 604.0M1064.2 410.9L1091.6 605.7M1046.0 413.4L1073.4 608.3M1033.2 415.2L1060.6 610.1M1017.9 417.4L1045.2 612.3M1003.5 419.4L1030.9 614.3M987.2 421.7L1014.6 616.6M972.4 423.8L999.8 618.7M958.6 425.7L986.0 620.6" stroke="#8f8484" stroke-width="1" fill="none" opacity="1"/><path clip-path="url(#g2b)" d="M955.8 518.8L1114.3 513.2M956.2 531.3L1114.8 525.7M956.7 543.5L1115.2 538.0M957.0 554.6L1115.6 549.1M957.5 567.3L1116.0 561.7M957.9 579.7L1116.5 574.2M958.3 590.7L1116.9 585.2M958.7 602.2L1117.3 596.7M959.1 614.2L1117.7 608.7M959.6 627.2L1118.1 621.7M960.0 639.1L1118.5 633.6M960.4 651.7L1119.0 646.1M960.8 663.4L1119.4 657.9M961.2 674.2L1119.8 668.7M961.6 686.1L1120.2 680.6M1123.2 517.7L1128.7 676.2M1105.8 518.3L1111.4 676.8M1087.3 518.9L1092.8 677.5M1069.5 519.5L1075.0 678.1M1051.9 520.1L1057.5 678.7M1035.7 520.7L1041.3 679.3M1017.0 521.4L1022.5 679.9M1000.6 521.9L1006.2 680.5M982.9 522.6L988.5 681.1M964.8 523.2L970.4 681.7M948.6 523.7L954.1 682.3" stroke="#8f8484" stroke-width="1" fill="none" opacity="1"/><path clip-path="url(#g1b)" d="M1085.5 363.0L1198.1 404.0M1081.9 372.9L1194.6 413.9M1079.2 380.3L1191.8 421.3M1076.1 388.9L1188.7 429.9M1072.9 397.8L1185.5 438.8M1069.7 406.4L1182.4 447.4M1067.1 413.6L1179.7 454.6M1063.8 422.7L1176.4 463.7M1060.7 431.3L1173.3 472.3M1057.5 439.9L1170.2 480.9M1054.6 447.8L1167.3 488.8M1051.3 457.0L1163.9 498.0M1048.0 466.1L1160.6 507.1M1045.3 473.5L1157.9 514.5M1042.1 482.3L1154.7 523.3" stroke="#8f8484" stroke-width="1" fill="none" opacity="1"/><path clip-path="url(#g3)" d="M1038.6 64.5L1151.2 94.7M1035.3 76.7L1148.0 106.9M1031.8 89.8L1144.5 120.0M1029.3 99.2L1141.9 129.4M1025.4 113.8L1138.0 144.0M1022.3 125.5L1134.9 155.7M1020.0 133.9L1132.6 164.1M1016.0 148.8L1128.7 179.0M1013.5 158.2L1126.1 188.4M1010.0 171.3L1122.6 201.5M1006.9 182.9L1119.5 213.0M1161.2 94.3L1141.0 209.1M1141.3 90.8L1121.0 205.6M1123.7 87.7L1103.4 202.5M1105.0 84.4L1084.8 199.2M1090.5 81.8L1070.3 196.7M1069.9 78.2L1049.6 193.0M1050.9 74.8L1030.7 189.7M1034.9 72.0L1014.7 186.9M1018.0 69.0L997.8 183.9" stroke="#8f8484" stroke-width="1" fill="none" opacity="1"/><path clip-path="url(#g4)" d="M907.6 716.3L1154.0 543.7M913.2 724.3L1159.6 551.7M918.2 731.5L1164.6 558.9M923.7 739.4L1170.2 566.8M928.9 746.7L1175.3 574.2M933.9 753.9L1180.4 581.3M938.6 760.7L1185.1 588.1M944.3 768.8L1190.8 596.2M949.4 776.2L1195.9 603.6M954.1 782.8L1200.6 610.2M960.1 791.3L1206.6 618.7M965.0 798.3L1211.5 625.7M969.5 804.8L1216.0 632.2M975.6 813.5L1222.1 640.9M979.9 819.6L1226.3 647.0M985.2 827.3L1231.7 654.7M990.8 835.3L1237.3 662.7M995.9 842.5L1242.4 669.9M1001.0 849.8L1247.5 677.2M1006.2 857.3L1252.7 684.7M1011.2 864.3L1257.7 691.8M1016.2 871.5L1262.7 698.9M1021.2 878.6L1267.7 706.0M1026.2 885.8L1272.7 713.2M1032.1 894.3L1278.6 721.7M1037.3 901.7L1283.8 729.1M1042.3 908.7L1288.8 736.1M1047.7 916.4L1294.1 743.8M1052.4 923.2L1298.9 750.6M1057.4 930.4L1303.9 757.8M1062.7 937.9L1309.2 765.4M1068.5 946.1L1314.9 773.5M1072.7 952.1L1319.2 779.5M1078.4 960.3L1324.8 787.7M1083.2 967.2L1329.7 794.6M1146.9 543.3L1332.1 780.4M1137.2 550.9L1322.4 788.0M1126.2 559.5L1311.4 796.6M1114.9 568.2L1300.2 805.4M1103.5 577.2L1288.7 814.3M1091.7 586.4L1277.0 823.5M1082.0 594.0L1267.3 831.1M1069.4 603.8L1254.7 840.9M1060.7 610.6L1245.9 847.7M1049.2 619.6L1234.4 856.8M1038.7 627.8L1223.9 865.0M1027.6 636.5L1212.8 873.6M1014.5 646.7L1199.7 883.9M1003.6 655.2L1188.8 892.4M994.3 662.5L1179.5 899.6M983.2 671.2L1168.5 908.3M971.5 680.3L1156.7 917.5M959.4 689.8L1144.7 926.9M948.2 698.6L1133.4 935.7M937.3 707.0L1122.6 944.1M926.8 715.2L1112.0 952.4M917.2 722.8L1102.4 959.9M905.3 732.0L1090.6 969.1" stroke="#9a8656" stroke-width="1" fill="none" opacity="1"/><path clip-path="url(#g5)" d="M616.2 618.9L996.1 865.6M609.9 628.7L989.7 875.4M603.8 638.0L983.7 884.7M598.2 646.6L978.1 893.3M592.2 655.9L972.1 902.6M585.6 666.0L965.5 912.7M580.4 674.0L960.3 920.7M573.6 684.5L953.5 931.2M567.5 693.9L947.4 940.6M561.5 703.2L941.3 949.9M556.1 711.5L936.0 958.2M549.9 721.0L929.8 967.7M543.9 730.3L923.8 977.0M537.8 739.6L917.7 986.3M531.5 749.4L911.4 996.1M525.8 758.1L905.7 1004.8M520.2 766.7L900.1 1013.4M513.6 776.9L893.5 1023.5M508.1 785.5L887.9 1032.1M501.9 794.9L881.8 1041.6M495.8 804.3L875.7 1051.0M490.6 812.3L870.5 1059.0M483.8 822.8L863.7 1069.5M477.9 831.9L857.8 1078.6M472.1 840.8L852.0 1087.5M466.1 850.1L845.9 1096.8M460.2 859.2L840.0 1105.9M454.5 868.0L834.3 1114.7M448.1 877.8L828.0 1124.5M442.6 886.2L822.5 1132.9M436.1 896.2L816.0 1142.9M430.0 905.7L809.9 1152.3M424.2 914.5L804.1 1161.2M418.1 924.0L798.0 1170.7M411.7 933.9L791.6 1180.5M405.8 943.0L785.6 1189.7M400.6 950.9L780.5 1197.6M393.9 961.3L773.8 1207.9M388.1 970.2L768.0 1216.9M382.7 978.5L762.6 1225.1M376.4 988.2L756.3 1234.9M370.5 997.2L750.4 1243.9M364.7 1006.2L744.6 1252.9M355.3 985.6L615.1 614.6M368.0 994.5L627.8 623.5M377.5 1001.2L637.3 630.1M390.8 1010.4L650.6 639.4M401.7 1018.1L661.5 647.0M411.3 1024.8L671.1 653.8M425.1 1034.5L684.9 663.5M435.8 1041.9L695.5 670.9M448.3 1050.7L708.1 679.7M459.1 1058.3L718.9 687.2M470.6 1066.4L730.4 695.3M480.8 1073.5L740.6 702.4M493.8 1082.6L753.6 711.5M505.6 1090.9L765.4 719.9M516.9 1098.8L776.7 727.7M527.0 1105.8L786.8 734.8M539.5 1114.6L799.3 743.5M550.1 1122.0L809.9 750.9M560.3 1129.1L820.1 758.1M571.5 1137.0L831.3 766.0M583.1 1145.1L842.9 774.1M595.0 1153.4L854.8 782.4M606.3 1161.4L866.1 790.4M618.9 1170.2L878.7 799.2M631.0 1178.7L890.8 807.7M642.0 1186.3L901.8 815.3M653.1 1194.1L912.9 823.1M665.3 1202.7L925.1 831.6M675.6 1209.9L935.4 838.9M687.6 1218.3L947.4 847.3M700.0 1227.0L959.8 856.0M710.3 1234.2L970.1 863.2M721.1 1241.7L980.9 870.7M734.9 1251.4L994.7 880.4M745.8 1259.0L1005.6 888.0" stroke="#9a8656" stroke-width="1" fill="none" opacity="1"/><path clip-path="url(#g6)" d="M804.8 -226.2L986.7 273.8M784.1 -218.6L966.0 281.3M762.2 -210.7L944.2 289.3M741.0 -203.0L923.0 297.0M723.1 -196.5L905.1 303.5M704.1 -189.5L886.1 310.4M681.9 -181.5L863.9 318.5M656.9 -172.4L838.9 327.6M641.1 -166.6L823.0 333.4M618.0 -158.2L800.0 341.8M599.3 -151.4L781.3 348.6M578.5 -143.8L760.5 356.1M558.2 -136.4L740.1 363.6M535.7 -128.3L717.7 371.7M516.8 -121.4L698.8 378.6M497.2 -114.2L679.2 385.7M475.9 -106.5L657.9 393.5M454.8 -98.8L636.8 401.2M431.7 -90.4L613.7 409.6M414.3 -84.0L596.3 415.9M393.9 -76.6L575.9 423.4M370.0 -67.9L552.0 432.0M349.6 -60.5L531.6 439.5M326.8 -52.2L508.7 447.8M311.0 -46.4L493.0 453.5M287.7 -38.0L469.6 462.0M267.0 -30.5L449.0 469.5M255.1 215.0L521.1 -245.8M289.2 234.7L555.2 -226.1M308.7 246.0L574.7 -214.8M333.6 260.4L599.6 -200.4M362.9 277.3L628.9 -183.5M386.2 290.7L652.2 -170.1M416.1 308.0L682.1 -152.8M439.7 321.6L705.7 -139.2M463.7 335.5L729.8 -125.3M489.1 350.1L755.1 -110.6M520.9 368.5L787.0 -92.3M543.0 381.3L809.0 -79.5M573.4 398.8L839.5 -62.0M596.6 412.2L862.6 -48.6M626.6 429.6L892.7 -31.2M647.1 441.4L913.2 -19.4M672.7 456.1L938.7 -4.6M698.8 471.2L964.8 10.4M729.5 489.0L995.6 28.2" stroke="#8f8484" stroke-width="1" fill="none" opacity="1"/><path clip-path="url(#g7)" d="M870.8 187.6L1114.7 46.8M878.2 200.5L1122.1 59.7M885.7 213.5L1129.6 72.7M894.9 229.4L1138.8 88.6M903.5 244.2L1147.4 103.4M910.7 256.8L1154.6 116.0M917.6 268.6L1161.5 127.8M925.6 282.6L1169.5 141.8M933.7 296.6L1177.6 155.8M941.9 310.8L1185.8 170.0M949.6 324.2L1193.5 183.3M957.7 338.1L1201.6 197.3M966.9 354.0L1210.8 213.2M975.4 368.7L1219.2 227.9M982.0 380.2L1225.8 239.3M991.5 396.7L1235.4 255.9M998.5 408.8L1242.4 268.0M1007.2 423.8L1251.1 283.0M1015.4 438.1L1259.3 297.2M1128.5 48.0L1260.7 296.6M1106.8 59.5L1239.0 308.2M1078.9 74.4L1211.1 323.0M1050.8 89.3L1183.0 338.0M1022.5 104.3L1154.7 353.0M1000.6 116.0L1132.8 364.7M973.0 130.7L1105.2 379.3M943.6 146.3L1075.8 395.0M921.0 158.3L1053.2 407.0M893.0 173.2L1025.2 421.9M866.8 187.1L999.0 435.8" stroke="#9a8656" stroke-width="1" fill="none" opacity="1"/><path clip-path="url(#g8)" d="M410.6 836.0L512.9 907.7M398.3 853.6L500.6 925.3M389.4 866.3L491.7 938.0M376.0 885.5L478.3 957.1M364.5 901.8L466.9 973.5M352.7 918.7L455.0 990.4M342.2 933.7L444.5 1005.4M329.5 951.9L431.8 1023.6M319.9 965.5L422.3 1037.2M316.1 933.8L396.4 838.1M334.9 949.5L415.2 853.8M358.1 969.1L438.4 873.4M376.2 984.3L456.5 888.5M394.9 999.9L475.2 904.2M414.2 1016.1L494.5 920.4M437.5 1035.6L517.8 939.9" stroke="#8f8484" stroke-width="1" fill="none" opacity="1"/><path d="M1012.0 120.0 L1031.0 133.0 L1017.0 167.0 L1048.0 188.0 L1008.0 253.0" stroke="#2f5a26" stroke-width="1.1" fill="none"/><path d="M1009.0 695.0 L1064.0 729.0 L1114.0 800.0" stroke="#2f5a26" stroke-width="1.1" fill="none"/><path d="M1114.0 800.0 L1092.0 818.0 L1069.0 834.0 L1014.0 848.0" stroke="#2f5a26" stroke-width="1.1" fill="none"/><path d="M1009.0 679.0 L1053.0 685.0 L1137.0 709.0 L1169.0 700.0 L1199.0 682.0" stroke="#2f5a26" stroke-width="1.1" fill="none"/><path d="M1169.0 700.0 L1183.0 720.0 L1203.0 729.0 L1222.0 716.0 L1215.0 697.0 L1200.0 700.0" stroke="#2f5a26" stroke-width="1.1" fill="none"/><path d="M1192.0 663.0 L1194.0 682.0" stroke="#2f5a26" stroke-width="1.1" fill="none"/><path d="M1203.0 738.0 L1215.0 763.0 L1229.0 752.0 L1260.0 752.0 L1317.0 779.0 L1348.0 781.0" stroke="#2f5a26" stroke-width="1.1" fill="none"/><path d="M1067.0 836.0 L1191.0 892.0 L1224.0 888.0 L1272.0 889.0 L1258.0 923.0 L1345.0 961.0" stroke="#2f5a26" stroke-width="1.1" fill="none"/><path d="M1278.0 760.0 L1320.0 782.0" stroke="#2f5a26" stroke-width="1.1" fill="none"/><path d="M1093.0 850.0 L1024.0 928.0" stroke="#2f5a26" stroke-width="1.1" fill="none"/><path d="M1009.0 736.0 L1053.0 748.0" stroke="#2f5a26" stroke-width="1.1" fill="none"/><path d="M718.0 945.0 L771.0 911.0" stroke="#2f5a26" stroke-width="1.1" fill="none"/><path d="M841.0 911.0 L849.0 923.0" stroke="#2f5a26" stroke-width="1.1" fill="none"/><path d="M1009 520.0 C1013.3 524.7 1026.2 540.0 1035.0 548.0 C1043.8 556.0 1050.7 564.5 1062.0 568.0 C1073.3 571.5 1084.2 571.2 1103.0 569.0 C1121.8 566.8 1152.7 560.7 1175.0 555.0 C1197.3 549.3 1221.5 542.0 1237.0 535.0 C1252.5 528.0 1257.7 521.8 1268.0 513.0 C1278.3 504.2 1291.7 492.8 1299.0 482.0 C1306.3 471.2 1305.7 456.3 1312.0 448.0 C1318.3 439.7 1326.2 437.0 1337.0 432.0 C1347.8 427.0 1370.3 420.3 1377.0 418.0" stroke="#9a6e62" stroke-width="1.0" fill="none"/><path d="M1009 522.0 C1013.3 526.7 1026.2 542.0 1035.0 550.0 C1043.8 558.0 1050.7 566.5 1062.0 570.0 C1073.3 573.5 1084.2 573.2 1103.0 571.0 C1121.8 568.8 1152.7 562.7 1175.0 557.0 C1197.3 551.3 1221.5 544.0 1237.0 537.0 C1252.5 530.0 1257.7 523.8 1268.0 515.0 C1278.3 506.2 1291.7 494.8 1299.0 484.0 C1306.3 473.2 1305.7 458.3 1312.0 450.0 C1318.3 441.7 1326.2 439.0 1337.0 434.0 C1347.8 429.0 1370.3 422.3 1377.0 420.0" stroke="#9a6e62" stroke-width="1.0" fill="none"/><path d="M1009 524.0 C1013.3 528.7 1026.2 544.0 1035.0 552.0 C1043.8 560.0 1050.7 568.5 1062.0 572.0 C1073.3 575.5 1084.2 575.2 1103.0 573.0 C1121.8 570.8 1152.7 564.7 1175.0 559.0 C1197.3 553.3 1221.5 546.0 1237.0 539.0 C1252.5 532.0 1257.7 525.8 1268.0 517.0 C1278.3 508.2 1291.7 496.8 1299.0 486.0 C1306.3 475.2 1305.7 460.3 1312.0 452.0 C1318.3 443.7 1326.2 441.0 1337.0 436.0 C1347.8 431.0 1370.3 424.3 1377.0 422.0" stroke="#9a6e62" stroke-width="1.0" fill="none"/><path d="M1131 509.0 C1143.0 508.0 1180.7 507.2 1203.0 503.0 C1225.3 498.8 1248.8 487.2 1265.0 484.0 C1281.2 480.8 1287.0 483.5 1300.0 484.0 C1313.0 484.5 1330.2 485.3 1343.0 487.0 C1355.8 488.7 1371.3 492.8 1377.0 494.0" stroke="#9a6e62" stroke-width="1.0" fill="none"/><path d="M1265 484.0 C1269.2 481.7 1282.2 475.7 1290.0 470.0 C1297.8 464.3 1308.3 453.3 1312.0 450.0" stroke="#9a6e62" stroke-width="1.0" fill="none"/><path d="M1377 420.4 C1374.2 428.1 1365.3 448.7 1360.0 466.4 C1354.7 484.1 1349.2 506.4 1345.0 526.4 C1340.8 546.4 1338.2 568.1 1335.0 586.4 C1331.8 604.7 1330.3 622.7 1326.0 636.4 C1321.7 650.1 1316.5 657.4 1309.0 668.4 C1301.5 679.4 1291.8 684.4 1281.0 702.4 C1270.2 720.4 1250.7 755.7 1244.0 776.4 C1237.3 797.1 1248.0 811.9 1241.0 826.4 C1234.0 840.9 1217.0 851.7 1202.0 863.4 C1187.0 875.1 1166.0 886.2 1151.0 896.4 C1136.0 906.6 1119.8 914.1 1112.0 924.4 C1104.2 934.7 1105.3 952.7 1104.0 958.4" stroke="#9a6e62" stroke-width="1.0" fill="none"/><path d="M1377 422.2 C1374.2 429.9 1365.3 450.5 1360.0 468.2 C1354.7 485.9 1349.2 508.2 1345.0 528.2 C1340.8 548.2 1338.2 569.9 1335.0 588.2 C1331.8 606.5 1330.3 624.5 1326.0 638.2 C1321.7 651.9 1316.5 659.2 1309.0 670.2 C1301.5 681.2 1291.8 686.2 1281.0 704.2 C1270.2 722.2 1250.7 757.5 1244.0 778.2 C1237.3 798.9 1248.0 813.7 1241.0 828.2 C1234.0 842.7 1217.0 853.5 1202.0 865.2 C1187.0 876.9 1166.0 888.0 1151.0 898.2 C1136.0 908.4 1119.8 915.9 1112.0 926.2 C1104.2 936.5 1105.3 954.5 1104.0 960.2" stroke="#9a6e62" stroke-width="1.0" fill="none"/><path d="M1377 424.0 C1374.2 431.7 1365.3 452.3 1360.0 470.0 C1354.7 487.7 1349.2 510.0 1345.0 530.0 C1340.8 550.0 1338.2 571.7 1335.0 590.0 C1331.8 608.3 1330.3 626.3 1326.0 640.0 C1321.7 653.7 1316.5 661.0 1309.0 672.0 C1301.5 683.0 1291.8 688.0 1281.0 706.0 C1270.2 724.0 1250.7 759.3 1244.0 780.0 C1237.3 800.7 1248.0 815.5 1241.0 830.0 C1234.0 844.5 1217.0 855.3 1202.0 867.0 C1187.0 878.7 1166.0 889.8 1151.0 900.0 C1136.0 910.2 1119.8 917.7 1112.0 928.0 C1104.2 938.3 1105.3 956.3 1104.0 962.0" stroke="#9a6e62" stroke-width="1.0" fill="none"/><path d="M1377 425.8 C1374.2 433.5 1365.3 454.1 1360.0 471.8 C1354.7 489.5 1349.2 511.8 1345.0 531.8 C1340.8 551.8 1338.2 573.5 1335.0 591.8 C1331.8 610.1 1330.3 628.1 1326.0 641.8 C1321.7 655.5 1316.5 662.8 1309.0 673.8 C1301.5 684.8 1291.8 689.8 1281.0 707.8 C1270.2 725.8 1250.7 761.1 1244.0 781.8 C1237.3 802.5 1248.0 817.3 1241.0 831.8 C1234.0 846.3 1217.0 857.1 1202.0 868.8 C1187.0 880.5 1166.0 891.6 1151.0 901.8 C1136.0 912.0 1119.8 919.5 1112.0 929.8 C1104.2 940.1 1105.3 958.1 1104.0 963.8" stroke="#9a6e62" stroke-width="1.0" fill="none"/><path d="M1377 427.6 C1374.2 435.3 1365.3 455.9 1360.0 473.6 C1354.7 491.3 1349.2 513.6 1345.0 533.6 C1340.8 553.6 1338.2 575.3 1335.0 593.6 C1331.8 611.9 1330.3 629.9 1326.0 643.6 C1321.7 657.3 1316.5 664.6 1309.0 675.6 C1301.5 686.6 1291.8 691.6 1281.0 709.6 C1270.2 727.6 1250.7 762.9 1244.0 783.6 C1237.3 804.3 1248.0 819.1 1241.0 833.6 C1234.0 848.1 1217.0 858.9 1202.0 870.6 C1187.0 882.3 1166.0 893.4 1151.0 903.6 C1136.0 913.8 1119.8 921.3 1112.0 931.6 C1104.2 941.9 1105.3 959.9 1104.0 965.6" stroke="#9a6e62" stroke-width="1.0" fill="none"/><path d="M1377 494.0 C1372.5 501.7 1357.8 522.3 1350.0 540.0 C1342.2 557.7 1333.3 590.0 1330.0 600.0" stroke="#9a6e62" stroke-width="1.0" fill="none"/><path d="M1320 653.75 C1295.7 671.2 1207.7 734.2 1174.0 758.8 C1140.3 783.2 1131.5 786.2 1118.0 800.8 C1104.5 815.2 1108.5 825.1 1093.0 845.8 C1077.5 866.4 1040.5 909.2 1025.0 924.8 C1009.5 940.2 1004.2 936.4 1000.0 938.8" stroke="#9a6e62" stroke-width="1.0" fill="none"/><path d="M1320 656.25 C1295.7 673.8 1207.7 736.8 1174.0 761.2 C1140.3 785.8 1131.5 788.8 1118.0 803.2 C1104.5 817.8 1108.5 827.6 1093.0 848.2 C1077.5 868.9 1040.5 911.8 1025.0 927.2 C1009.5 942.8 1004.2 938.9 1000.0 941.2" stroke="#9a6e62" stroke-width="1.0" fill="none"/><path d="M680 908.8 C686.7 911.6 707.3 921.3 720.0 925.8 C732.7 930.3 737.5 935.5 756.0 935.8 C774.5 936.1 810.2 931.1 831.0 927.8 C851.8 924.5 864.2 918.3 881.0 915.8 C897.8 913.3 908.8 911.6 932.0 912.8 C955.2 914.0 1005.3 921.1 1020.0 922.8" stroke="#9a6e62" stroke-width="1.0" fill="none"/><path d="M680 911.0 C686.7 913.8 707.3 923.5 720.0 928.0 C732.7 932.5 737.5 937.7 756.0 938.0 C774.5 938.3 810.2 933.3 831.0 930.0 C851.8 926.7 864.2 920.5 881.0 918.0 C897.8 915.5 908.8 913.8 932.0 915.0 C955.2 916.2 1005.3 923.3 1020.0 925.0" stroke="#9a6e62" stroke-width="1.0" fill="none"/><path d="M680 913.2 C686.7 916.0 707.3 925.7 720.0 930.2 C732.7 934.7 737.5 939.9 756.0 940.2 C774.5 940.5 810.2 935.5 831.0 932.2 C851.8 928.9 864.2 922.7 881.0 920.2 C897.8 917.7 908.8 916.0 932.0 917.2 C955.2 918.4 1005.3 925.5 1020.0 927.2" stroke="#9a6e62" stroke-width="1.0" fill="none"/><path d="M705 955.8 C713.3 954.0 725.7 947.5 755.0 944.8 C784.3 942.1 843.2 941.3 881.0 939.8 C918.8 938.3 957.5 938.6 982.0 935.8 C1006.5 933.0 1020.3 925.0 1028.0 922.8" stroke="#9a6e62" stroke-width="1.0" fill="none"/><path d="M705 958.0 C713.3 956.2 725.7 949.7 755.0 947.0 C784.3 944.3 843.2 943.5 881.0 942.0 C918.8 940.5 957.5 940.8 982.0 938.0 C1006.5 935.2 1020.3 927.2 1028.0 925.0" stroke="#9a6e62" stroke-width="1.0" fill="none"/><path d="M705 960.2 C713.3 958.4 725.7 951.9 755.0 949.2 C784.3 946.5 843.2 945.7 881.0 944.2 C918.8 942.7 957.5 943.0 982.0 940.2 C1006.5 937.4 1020.3 929.4 1028.0 927.2" stroke="#9a6e62" stroke-width="1.0" fill="none"/><path d="M880 908.8 C880.0 917.3 880.0 951.3 880.0 959.8" stroke="#9a6e62" stroke-width="1.0" fill="none"/><path d="M880 911.0 C880.0 919.5 880.0 953.5 880.0 962.0" stroke="#9a6e62" stroke-width="1.0" fill="none"/><path d="M880 913.2 C880.0 921.7 880.0 955.7 880.0 964.2" stroke="#9a6e62" stroke-width="1.0" fill="none"/><path d="M470 912.0 C465.0 915.3 450.0 924.2 440.0 932.0 C430.0 939.8 415.0 954.5 410.0 959.0" stroke="#9a6e62" stroke-width="1.0" fill="none"/><path d="M470 914.0 C465.0 917.3 450.0 926.2 440.0 934.0 C430.0 941.8 415.0 956.5 410.0 961.0" stroke="#9a6e62" stroke-width="1.0" fill="none"/><path d="M470 916.0 C465.0 919.3 450.0 928.2 440.0 936.0 C430.0 943.8 415.0 958.5 410.0 963.0" stroke="#9a6e62" stroke-width="1.0" fill="none"/><path d="M470 918.0 C465.0 921.3 450.0 930.2 440.0 938.0 C430.0 945.8 415.0 960.5 410.0 965.0" stroke="#9a6e62" stroke-width="1.0" fill="none"/><path d="M1062 668.0 C1073.3 667.3 1104.8 665.3 1130.0 664.0 C1155.2 662.7 1188.0 661.5 1213.0 660.0 C1238.0 658.5 1260.5 655.0 1280.0 655.0 C1299.5 655.0 1313.8 657.2 1330.0 660.0 C1346.2 662.8 1369.2 670.0 1377.0 672.0" stroke="#9a6e62" stroke-width="1.0" fill="none"/><path d="M1121 117.0 C1121.2 120.7 1121.3 131.2 1122.0 139.0 C1122.7 146.8 1124.5 159.8 1125.0 164.0" stroke="#9a6e62" stroke-width="1.0" fill="none"/><path d="M1121 119.0 C1121.2 122.7 1121.3 133.2 1122.0 141.0 C1122.7 148.8 1124.5 161.8 1125.0 166.0" stroke="#9a6e62" stroke-width="1.0" fill="none"/><ellipse cx="1300" cy="470" rx="9" ry="12" fill="none" stroke="#9a6e62" stroke-width="1"/><ellipse cx="1318" cy="462" rx="6" ry="8" fill="none" stroke="#9a6e62" stroke-width="1"/><ellipse cx="1290" cy="505" rx="7" ry="6" fill="none" stroke="#9a6e62" stroke-width="1"/><ellipse cx="1341" cy="655" rx="10" ry="9" fill="none" stroke="#9a6e62" stroke-width="1"/><ellipse cx="1352" cy="660" rx="6" ry="6" fill="none" stroke="#9a6e62" stroke-width="1"/><ellipse cx="1248" cy="713" rx="9" ry="10" fill="none" stroke="#9a6e62" stroke-width="1"/><ellipse cx="1050" cy="935" rx="10" ry="8" fill="none" stroke="#9a6e62" stroke-width="1"/><ellipse cx="1020" cy="950" rx="8" ry="6" fill="none" stroke="#9a6e62" stroke-width="1"/><path d="M1376 498.9 C1370.0 495.6 1352.7 480.9 1340.0 478.9 C1327.3 476.9 1313.3 480.2 1300.0 486.9 C1286.7 493.6 1266.7 513.6 1260.0 518.9" stroke="#9a6e62" stroke-width="1.0" fill="none"/><path d="M1376 501.1 C1370.0 497.8 1352.7 483.1 1340.0 481.1 C1327.3 479.1 1313.3 482.4 1300.0 489.1 C1286.7 495.8 1266.7 515.8 1260.0 521.1" stroke="#9a6e62" stroke-width="1.0" fill="none"/><path d="M1010 883.9 C1018.3 886.4 1045.0 891.4 1060.0 898.9 C1075.0 906.4 1086.7 918.6 1100.0 928.9 C1113.3 939.2 1133.3 955.6 1140.0 960.9" stroke="#9a6e62" stroke-width="1.0" fill="none"/><path d="M1010 886.1 C1018.3 888.6 1045.0 893.6 1060.0 901.1 C1075.0 908.6 1086.7 920.8 1100.0 931.1 C1113.3 941.4 1133.3 957.8 1140.0 963.1" stroke="#9a6e62" stroke-width="1.0" fill="none"/><path d="M1008 928.9 C1013.3 931.4 1029.7 938.6 1040.0 943.9 C1050.3 949.2 1065.0 958.1 1070.0 960.9" stroke="#9a6e62" stroke-width="1.0" fill="none"/><path d="M1008 931.1 C1013.3 933.6 1029.7 940.8 1040.0 946.1 C1050.3 951.4 1065.0 960.3 1070.0 963.1" stroke="#9a6e62" stroke-width="1.0" fill="none"/><path d="M1292.0 118.0 L1280.0 223.0 L1296.0 264.0 L1377.0 357.0" stroke="#8f8484" stroke-width="1" fill="none"/><path d="M1239.0 268.0 L1296.0 264.0" stroke="#8f8484" stroke-width="1" fill="none"/><path d="M1324.0 207.0 L1340.0 213.0 L1332.0 244.0 L1320.0 242.0" stroke="#8f8484" stroke-width="1" fill="none"/><path d="M1270.0 330.0 L1320.0 290.0" stroke="#8f8484" stroke-width="1" fill="none"/><path d="M1150.0 416.0 L1224.0 472.0 L1228.0 494.0 L1203.0 503.0 L1200.0 495.0" stroke="#8f8484" stroke-width="1" fill="none"/><path d="M1146.0 400.0 L1143.0 465.0 L1143.0 500.0" stroke="#8f8484" stroke-width="1" fill="none"/><path d="M1100.0 500.0 L1115.0 520.0 L1130.0 512.0" stroke="#8f8484" stroke-width="1" fill="none"/><path d="M1145.0 510.0 L1160.0 535.0 L1170.0 550.0" stroke="#8f8484" stroke-width="1" fill="none"/><path d="M1175.0 505.0 L1180.0 540.0" stroke="#8f8484" stroke-width="1" fill="none"/><path d="M1062.0 615.0 L1097.0 615.0 L1097.0 650.0 L1062.0 650.0" stroke="#8f8484" stroke-width="1" fill="none"/><path d="M1062.0 632.0 L1097.0 632.0" stroke="#8f8484" stroke-width="1" fill="none"/><path d="M1080.0 615.0 L1080.0 632.0" stroke="#8f8484" stroke-width="1" fill="none"/><path d="M1102.0 620.0 L1115.0 610.0 L1130.0 605.0 L1140.0 600.0" stroke="#8f8484" stroke-width="1" fill="none"/><path d="M1120.0 625.0 L1120.0 615.0" stroke="#8f8484" stroke-width="1" fill="none"/><path d="M1130.0 118.0 L1180.0 150.0" stroke="#8f8484" stroke-width="1" fill="none"/><path d="M1191.0 624.0 L1213.0 613.0 L1257.0 610.0" stroke="#9a8656" stroke-width="1" fill="none"/><path d="M1191.0 624.0 L1194.0 681.0" stroke="#9a8656" stroke-width="1" fill="none"/><path d="M1213.0 613.0 L1222.0 650.0" stroke="#9a8656" stroke-width="1" fill="none"/><path d="M1230.0 612.0 L1236.0 650.0" stroke="#9a8656" stroke-width="1" fill="none"/><path d="M1238.0 612.0 L1244.0 650.0" stroke="#9a8656" stroke-width="1" fill="none"/><path d="M1247.0 612.0 L1253.0 648.0" stroke="#9a8656" stroke-width="1" fill="none"/><path d="M1191.0 633.0 L1250.0 630.0" stroke="#9a8656" stroke-width="1" fill="none"/><path d="M1219.0 650.0 L1252.0 648.0" stroke="#9a8656" stroke-width="1" fill="none"/><path d="M1174.0 646.0 L1191.0 646.0 L1191.0 654.0 L1174.0 654.0 L1174.0 646.0" stroke="#9a8656" stroke-width="1" fill="none"/><path d="M1180.0 646.0 L1180.0 654.0" stroke="#9a8656" stroke-width="1" fill="none"/><path d="M1185.0 646.0 L1185.0 654.0" stroke="#9a8656" stroke-width="1" fill="none"/><path d="M1294.0 585.0 L1283.0 619.0 L1286.0 655.0" stroke="#9a8656" stroke-width="1" fill="none"/><path d="M1314.0 605.0 L1320.0 627.0 L1330.0 644.0" stroke="#9a8656" stroke-width="1" fill="none"/><path d="M1247.0 657.0 L1255.0 703.0 L1252.0 723.0" stroke="#9a8656" stroke-width="1" fill="none"/><path d="M1340.0 660.0 L1350.0 700.0 L1330.0 760.0" stroke="#9a8656" stroke-width="1" fill="none"/><path d="M1208.0 740.0 L1230.0 770.0 L1300.0 780.0" stroke="#9a8656" stroke-width="1" fill="none"/><path d="M1150.0 780.0 L1200.0 790.0 L1230.0 800.0" stroke="#9a8656" stroke-width="1" fill="none"/><path d="M1120.0 850.0 L1140.0 900.0 L1160.0 920.0" stroke="#9a8656" stroke-width="1" fill="none"/><path d="M1100.0 850.0 L1110.0 880.0" stroke="#9a8656" stroke-width="1" fill="none"/><path d="M1262.0 890.0 L1300.0 880.0 L1330.0 880.0" stroke="#9a8656" stroke-width="1" fill="none"/><path d="M1200.0 905.0 L1230.0 920.0 L1260.0 915.0 L1258.0 900.0" stroke="#9a8656" stroke-width="1" fill="none"/><path d="M1283.0 804.0 L1300.0 815.0 L1330.0 815.0" stroke="#9a8656" stroke-width="1" fill="none"/><path d="M1300.0 720.0 L1320.0 700.0 L1360.0 700.0" stroke="#9a8656" stroke-width="1" fill="none"/><path d="M1200.0 860.0 L1280.0 830.0" stroke="#9a8656" stroke-width="1" fill="none"/><path d="M1180.0 880.0 L1220.0 860.0 L1250.0 870.0" stroke="#9a8656" stroke-width="1" fill="none"/><path d="M1290.0 700.0 L1300.0 760.0 L1310.0 800.0" stroke="#9a8656" stroke-width="1" fill="none"/><path d="M1340.0 720.0 L1320.0 770.0 L1300.0 840.0" stroke="#9a8656" stroke-width="1" fill="none"/><path d="M1160.0 800.0 L1180.0 830.0 L1200.0 820.0" stroke="#9a8656" stroke-width="1" fill="none"/><path d="M1300.0 850.0 L1340.0 860.0 L1360.0 900.0" stroke="#9a8656" stroke-width="1" fill="none"/><path d="M1210.0 930.0 L1250.0 950.0 L1290.0 962.0" stroke="#9a8656" stroke-width="1" fill="none"/><path d="M1160.0 930.0 L1175.0 962.0" stroke="#9a8656" stroke-width="1" fill="none"/><path d="M1230.0 812.0 L1260.0 820.0 L1290.0 830.0" stroke="#9a8656" stroke-width="1" fill="none"/><circle cx="1229" cy="598" r="4" fill="#5cc04c" stroke="#2f6a2a" stroke-width="1"/><circle cx="1020" cy="242" r="2.8" fill="none" stroke="#2b5a25" stroke-width="1.2"/><circle cx="1122" cy="700" r="2.8" fill="none" stroke="#2b5a25" stroke-width="1.2"/><circle cx="1190" cy="697" r="2.8" fill="none" stroke="#2b5a25" stroke-width="1.2"/><circle cx="1069" cy="736" r="2.8" fill="none" stroke="#2b5a25" stroke-width="1.2"/><circle cx="1033" cy="772" r="2.8" fill="none" stroke="#2b5a25" stroke-width="1.2"/><circle cx="1034" cy="785" r="2.8" fill="none" stroke="#2b5a25" stroke-width="1.2"/><circle cx="1061" cy="778" r="2.8" fill="none" stroke="#2b5a25" stroke-width="1.2"/><circle cx="522" cy="932" r="2.8" fill="none" stroke="#2b5a25" stroke-width="1.2"/><circle cx="530" cy="937" r="2.8" fill="none" stroke="#2b5a25" stroke-width="1.2"/><circle cx="539" cy="941" r="2.8" fill="none" stroke="#2b5a25" stroke-width="1.2"/><circle cx="674" cy="914" r="2.8" fill="none" stroke="#2b5a25" stroke-width="1.2"/></svg></div><!--/map-->
<div id="rdock" style="background:#ececec;border-left:1px solid #d6d6d6"></div>
<div class="abs" style="left:1383px;top:117px;width:1px;height:845px;background:#d6d6d6"></div>
<div class="abs" style="left:1384px;top:118px;width:6px;height:844px;background:#fff"></div>
<div class="abs" style="left:1384px;top:118px;width:6px;height:50px;background:#ececec"></div>
<div class="abs" style="left:1387px;top:120px;font-size:13px;font-weight:bold;color:#222">R</div>
<div class="abs" style="left:1384px;top:168px;width:8px;height:24px;background:#fff;border:1px solid #c4c4c4;border-radius:3px"></div>
<div class="abs" style="left:1382px;top:391px;width:8px;height:17px;background:#b7d5f2;border-radius:2px"></div>

<!-- dialog -->
<div id="dlg">
  <div id="dtitle">Shortest Path (Point to Layer)
    <div class="tl" style="left:8px"></div><div class="tl" style="left:28px"></div><div class="tl" style="left:48px"></div>
  </div>
  <!-- tabs -->
  <div class="abs" style="left:104px;top:35px;width:47px;height:25px;background:linear-gradient(#e8e8e8,#e0e0e0);border:1px solid #c9c9c9;border-bottom:none;border-radius:3px 3px 0 0"></div>
  <div class="abs" style="left:11px;top:59px;width:537px;height:633px;border:1px solid #c4c4c4;background:#ebebeb"></div>
  <div class="abs" style="left:11px;top:33px;width:94px;height:27px;background:#fff;border:1px solid #c4c4c4;border-bottom:none;border-radius:3px 3px 0 0"></div>
  <div class="abs" style="left:12px;top:59px;width:92px;height:2px;background:#fff"></div>
  <div class="lbl" style="left:23px;top:39px">Parameters</div>
  <div class="lbl" style="left:115px;top:41px">Log</div>

  <div class="lbl" style="left:17px;top:65.5px">Vector layer representing network</div>
  <div class="combo" style="left:17px;top:87px;width:466px;height:24px">
    <svg class="abs" style="left:5px;top:4px" width="16" height="15" viewBox="0 0 16 15"><path d="M1.5 3 L5 12.5 L9.5 2.5 L13 2.3" fill="none" stroke="#555" stroke-width="1"/><circle cx="1.5" cy="3" r="1.3" fill="#fff" stroke="#666" stroke-width="0.8"/><circle cx="5" cy="12.5" r="1.3" fill="#fff" stroke="#666" stroke-width="0.8"/><circle cx="10" cy="2.3" r="1.3" fill="#fff" stroke="#666" stroke-width="0.8"/><circle cx="13.5" cy="2.3" r="1.3" fill="#fff" stroke="#666" stroke-width="0.8"/></svg>
    <span class="abs" style="left:24.5px;top:0;letter-spacing:0.07px">Tran_road_centerline_newark_area [EPSG:3424]</span>
    <div class="arrow" style="left:450px;top:9px"></div>
  </div>
  <div class="btn" style="left:489px;top:87px;width:23px;height:19px;line-height:15px;font-size:11px">...</div>
  <div class="btn" style="left:518px;top:87px;width:24px;height:23px"><svg width="16" height="16" viewBox="0 0 16 16" style="position:absolute;left:3px;top:3px"><path d="M8 2.2a5.8 5.8 0 1 1-5.6 7.3" fill="none" stroke="#5fae4f" stroke-width="2.6"/><path d="M0.6 9.2l4.8-1.6-0.6 5.2z" fill="#5fae4f"/><path d="M6.6 5.6v5l3.8-2.5z" fill="#5fae4f"/></svg></div>

  <div class="cb dis" style="left:17px;top:121px;width:14px;height:14px;background:#f3f3f3;border-color:#c8c8c8"></div>
  <div class="lbl" style="left:36px;top:120px;color:#8d8d8d">Selected features only</div>

  <div class="lbl" style="left:17px;top:145.5px">Path type to calculate</div>
  <div class="combo" style="left:17px;top:167.5px;width:525px;height:23px">
    <span class="abs" style="left:4.5px;top:0;line-height:22px;letter-spacing:0.3px">Shortest</span>
    <div class="arrow" style="left:509px;top:9px"></div>
  </div>

  <div class="lbl" style="left:17px;top:197.5px">Start point</div>
  <div class="combo" style="left:17px;top:219px;width:496px;height:23.5px;background:#fff"></div>
  <div class="btn" style="left:519.5px;top:221px;width:22.5px;height:18.5px;line-height:15px;font-size:11px">...</div>

  <div class="lbl" style="left:17px;top:249px">Vector layer with end points</div>
  <div class="combo" style="left:17px;top:271px;width:466px;height:23.5px">
    <svg class="abs" style="left:5px;top:4px" width="16" height="14" viewBox="0 0 16 14"><circle cx="2" cy="10" r="1.2" fill="#fff" stroke="#777" stroke-width="0.8"/><circle cx="4" cy="5.5" r="1.2" fill="#fff" stroke="#777" stroke-width="0.8"/><circle cx="9" cy="2" r="1.2" fill="#fff" stroke="#777" stroke-width="0.8"/></svg>
    <span class="abs" style="left:24.5px;top:0;line-height:22px;letter-spacing:0.3px">schools [EPSG:3424]</span>
    <div class="arrow" style="left:450px;top:9px"></div>
  </div>
  <div class="btn" style="left:489px;top:272px;width:23px;height:18.5px;line-height:15px;font-size:11px">...</div>
  <div class="btn" style="left:518px;top:271.5px;width:24px;height:22.5px"><svg width="16" height="16" viewBox="0 0 16 16" style="position:absolute;left:3px;top:3px"><path d="M8 2.2a5.8 5.8 0 1 1-5.6 7.3" fill="none" stroke="#5fae4f" stroke-width="2.6"/><path d="M0.6 9.2l4.8-1.6-0.6 5.2z" fill="#5fae4f"/><path d="M6.6 5.6v5l3.8-2.5z" fill="#5fae4f"/></svg></div>

  <div class="cb dis" style="left:17px;top:305px;width:14px;height:14px;background:#f3f3f3;border-color:#c8c8c8"></div>
  <div class="lbl" style="left:36px;top:303.7px;color:#8d8d8d">Selected features only</div>

  <div class="abs" style="left:22px;top:333px;width:0;height:0;border-top:5px solid transparent;border-bottom:5px solid transparent;border-left:7px solid #333"></div>
  <div class="lbl" style="left:39px;top:330px;font-weight:bold">Advanced parameters</div>

  <div class="lbl" style="left:17px;top:353.5px">Shortest path</div>
  <div class="combo" style="left:17px;top:376px;width:496px;height:22.5px;background:#fff">
    <span class="abs" style="left:0.5px;top:0;line-height:22px;letter-spacing:0.18px">oximity_concentration/processed/paths_diamond_alkalin_schools_newark.geojson</span>
  </div>
  <div class="btn" style="left:519.5px;top:377px;width:22.5px;height:21.5px;line-height:18px;font-size:11px">...</div>

  <div class="cb on" style="left:17px;top:409.5px;width:14px;height:13.5px"><svg width="11" height="11" viewBox="0 0 11 11"><path d="M1.3 5.6L4 9.6 9.6 0.8" fill="none" stroke="#111" stroke-width="1.7" stroke-linejoin="miter"/></svg></div>
  <div class="lbl" style="left:36px;top:408px">Open output file after running algorithm</div>

  <!-- collapse arrow -->
  <div class="abs" style="left:551.5px;top:35.5px;width:0;height:0;border-top:3.5px solid transparent;border-bottom:3.5px solid transparent;border-right:5px solid #333"></div>

  <!-- help panel -->
  <div class="abs" style="left:564px;top:33px;width:256px;height:660px;background:#fff;border:1px solid #cfcfcf">
    <div class="abs" style="left:4.5px;top:5.5px;width:245px;font-size:19px;line-height:24px;font-weight:bold;color:#454545">Shortest path (point to layer)</div>
    <div class="abs" style="left:4.5px;top:64.9px;width:250px;font-size:13px;line-height:16px;color:#555;letter-spacing:0.32px;white-space:nowrap">This algorithm computes optimal<br>(shortest or fastest) route between<br>given start point and multiple end points<br>defined by point vector layer.</div>
  </div>

  <!-- progress + buttons -->
  <div class="abs" style="left:11px;top:721.5px;width:723px;height:23px;background:#fff;border:1px solid #b9b9b9;border-radius:3px;text-align:center;font-size:13px;line-height:21px">0%</div>
  <div class="btn" style="left:740.5px;top:721.5px;width:79px;height:23px;color:#8a8a8a;background:linear-gradient(#fafafa,#f1f1f1);border-color:#d2d2d2">Cancel</div>
  <div class="btn" style="left:11px;top:751.5px;width:79.5px;height:23px">Help</div>
  <div class="btn" style="left:97px;top:751.5px;width:149.5px;height:23px">Run as Batch Process...</div>
  <div class="btn" style="left:654.5px;top:751.5px;width:79.5px;height:23px">Close</div>
  <div class="btn" style="left:740.5px;top:751.5px;width:79.5px;height:23px;border-color:#7ea4d8;background:linear-gradient(#fdfdff,#eef3fb)">Run</div>

</div>

<svg class="abs" style="left:628px;top:344px;z-index:50" width="13" height="19" viewBox="0 0 13 19"><path d="M1 1v14.5l3.6-3.4 2.6 5.6 2.3-1.1-2.5-5.4h5z" fill="#111" stroke="#fff" stroke-width="1"/></svg>
</body></html>
